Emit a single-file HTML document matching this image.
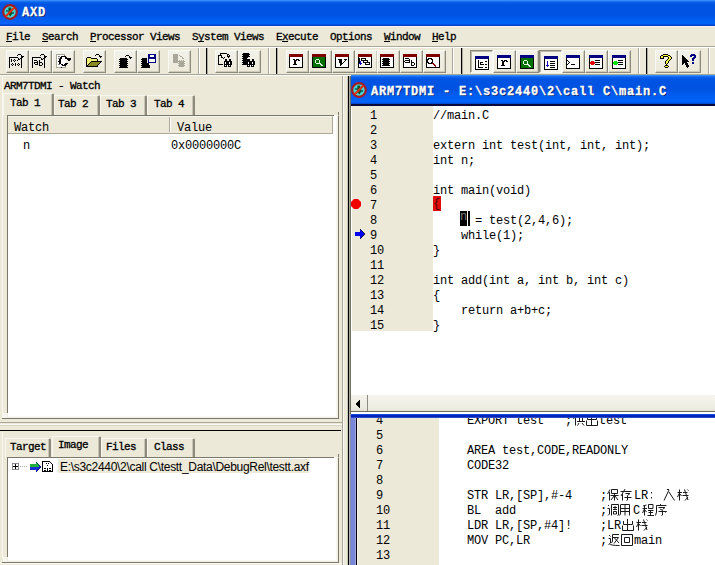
<!DOCTYPE html>
<html><head><meta charset="utf-8">
<style>
*{margin:0;padding:0;box-sizing:border-box}
html,body{width:715px;height:565px;overflow:hidden;background:#ECE9D8}
body{position:relative;font-family:"Liberation Mono",monospace;font-size:12px;color:#000}
.a{position:absolute}
.ui{font-family:"Liberation Mono",monospace;font-size:11px;letter-spacing:-0.6px;line-height:14px;white-space:pre;-webkit-text-stroke:0.3px #000}
.code{font-family:"Liberation Mono",monospace;font-size:12px;letter-spacing:-0.2px;line-height:15px;white-space:pre}
.u{text-decoration:underline}
.btn{position:absolute;top:50px;width:23px;height:23px;border:1px solid;border-color:#FAFAF5 #8D8B7D #8D8B7D #FAFAF5;box-shadow:inset -1px -1px 0 #CFCBBB;background:linear-gradient(#F2F1EA,#ECE9D8)}
.btn.p{border-color:#8A887A #FAFAF5 #FAFAF5 #8A887A;box-shadow:inset 1px 1px 0 #BDBAAA;background:#F4F3EC}
.btn svg{position:absolute;left:2px;top:2px}
.btn.p svg{left:3px;top:3px}
</style></head><body>

<div class="a" style="left:0px;top:0px;width:715px;height:26px;background:linear-gradient(#3D95FF 0px,#2A7FF7 1px,#0B62EC 2px,#0054E3 4px,#0053E1 15px,#005CF0 19px,#0064F8 24px,#0040CF 25px,#0038C0 26px)"></div>
<div class="a" style="left:0px;top:26px;width:715px;height:1px;background:#F6F5EF"></div>
<svg class="a" style="left:2px;top:4px" width="16" height="16" viewBox="0 0 16 16"><circle cx="8" cy="8" r="6.8" fill="#3ED8D8" stroke="#A81A20" stroke-width="2.2"/><path d="M6.5 3.5 L9 3.5 L10.5 9 L8.5 12.5 L6 10 Z" fill="#145020"/><circle cx="5" cy="7" r="1" fill="#145060"/><circle cx="11" cy="9" r="1" fill="#145060"/><line x1="3.5" y1="12.5" x2="12.5" y2="3.5" stroke="#E03010" stroke-width="2.2"/></svg>
<div class="a " style="left:22px;top:6px;font-family:'Liberation Mono',monospace;font-weight:bold;font-size:12px;line-height:14px;color:#fff;-webkit-text-stroke:0.3px #fff;text-shadow:1px 1px 0 #0A246A;letter-spacing:0.8px">AXD</div>
<div class="a" style="left:0px;top:46px;width:715px;height:1px;background:#ACA899"></div>
<div class="a" style="left:0px;top:47px;width:715px;height:1px;background:#FFFFFF"></div>
<div class="a ui" style="left:6px;top:30px;">File</div>
<div class="a" style="left:6px;top:41px;width:6px;height:1px;background:#000"></div>
<div class="a ui" style="left:42px;top:30px;">Search</div>
<div class="a" style="left:42px;top:41px;width:6px;height:1px;background:#000"></div>
<div class="a ui" style="left:90px;top:30px;">Processor Views</div>
<div class="a" style="left:90px;top:41px;width:6px;height:1px;background:#000"></div>
<div class="a ui" style="left:192px;top:30px;">System Views</div>
<div class="a" style="left:198px;top:41px;width:6px;height:1px;background:#000"></div>
<div class="a ui" style="left:276px;top:30px;">Execute</div>
<div class="a" style="left:282px;top:41px;width:6px;height:1px;background:#000"></div>
<div class="a ui" style="left:330px;top:30px;">Options</div>
<div class="a" style="left:342px;top:41px;width:6px;height:1px;background:#000"></div>
<div class="a ui" style="left:384px;top:30px;">Window</div>
<div class="a" style="left:384px;top:41px;width:6px;height:1px;background:#000"></div>
<div class="a ui" style="left:432px;top:30px;">Help</div>
<div class="a" style="left:432px;top:41px;width:6px;height:1px;background:#000"></div>
<div class="btn" style="left:6px"><svg width="16" height="16" viewBox="0 0 16 16" shape-rendering="crispEdges"><rect x="9" y="1" width="3" height="1" fill="#000000"/><rect x="8" y="2" width="1" height="1" fill="#000000"/><rect x="12" y="2" width="1" height="1" fill="#000000"/><rect x="12" y="3" width="3" height="1" fill="#000000"/><rect x="0" y="4" width="9" height="1" fill="#000000"/><rect x="12" y="4" width="2" height="1" fill="#000000"/><rect x="0" y="5" width="1" height="1" fill="#000000"/><rect x="9" y="5" width="1" height="1" fill="#000000"/><rect x="11" y="5" width="2" height="1" fill="#000000"/><rect x="0" y="6" width="1" height="1" fill="#000000"/><rect x="2" y="6" width="1" height="1" fill="#000000"/><rect x="5" y="6" width="1" height="1" fill="#000000"/><rect x="9" y="6" width="2" height="1" fill="#000000"/><rect x="12" y="6" width="1" height="1" fill="#000000"/><rect x="0" y="7" width="1" height="1" fill="#000000"/><rect x="2" y="7" width="1" height="1" fill="#000000"/><rect x="4" y="7" width="1" height="1" fill="#000000"/><rect x="6" y="7" width="1" height="1" fill="#000000"/><rect x="8" y="7" width="1" height="1" fill="#000000"/><rect x="12" y="7" width="1" height="1" fill="#000000"/><rect x="0" y="8" width="1" height="1" fill="#000000"/><rect x="2" y="8" width="1" height="1" fill="#000000"/><rect x="5" y="8" width="1" height="1" fill="#000000"/><rect x="12" y="8" width="1" height="1" fill="#000000"/><rect x="0" y="9" width="1" height="1" fill="#000000"/><rect x="12" y="9" width="1" height="1" fill="#000000"/><rect x="0" y="10" width="1" height="1" fill="#000000"/><rect x="3" y="10" width="1" height="1" fill="#000000"/><rect x="6" y="10" width="1" height="1" fill="#000000"/><rect x="9" y="10" width="1" height="1" fill="#000000"/><rect x="12" y="10" width="1" height="1" fill="#000000"/><rect x="0" y="11" width="1" height="1" fill="#000000"/><rect x="2" y="11" width="1" height="1" fill="#000000"/><rect x="4" y="11" width="1" height="1" fill="#000000"/><rect x="6" y="11" width="1" height="1" fill="#000000"/><rect x="8" y="11" width="1" height="1" fill="#000000"/><rect x="10" y="11" width="1" height="1" fill="#000000"/><rect x="12" y="11" width="1" height="1" fill="#000000"/><rect x="0" y="12" width="1" height="1" fill="#000000"/><rect x="3" y="12" width="1" height="1" fill="#000000"/><rect x="6" y="12" width="1" height="1" fill="#000000"/><rect x="9" y="12" width="1" height="1" fill="#000000"/><rect x="12" y="12" width="1" height="1" fill="#000000"/><rect x="0" y="13" width="1" height="1" fill="#000000"/><rect x="12" y="13" width="1" height="1" fill="#000000"/><rect x="0" y="14" width="1" height="1" fill="#000000"/><rect x="12" y="14" width="1" height="1" fill="#000000"/></svg></div>
<div class="btn" style="left:29px"><svg width="16" height="16" viewBox="0 0 16 16" shape-rendering="crispEdges"><rect x="9" y="1" width="3" height="1" fill="#000000"/><rect x="8" y="2" width="1" height="1" fill="#000000"/><rect x="12" y="2" width="1" height="1" fill="#000000"/><rect x="12" y="3" width="3" height="1" fill="#000000"/><rect x="0" y="4" width="9" height="1" fill="#000000"/><rect x="12" y="4" width="2" height="1" fill="#000000"/><rect x="0" y="5" width="1" height="1" fill="#000000"/><rect x="9" y="5" width="1" height="1" fill="#000000"/><rect x="11" y="5" width="2" height="1" fill="#000000"/><rect x="0" y="6" width="1" height="1" fill="#000000"/><rect x="9" y="6" width="2" height="1" fill="#000000"/><rect x="12" y="6" width="1" height="1" fill="#000000"/><rect x="0" y="7" width="1" height="1" fill="#000000"/><rect x="2" y="7" width="3" height="1" fill="#000000"/><rect x="7" y="7" width="1" height="1" fill="#000000"/><rect x="12" y="7" width="1" height="1" fill="#000000"/><rect x="0" y="8" width="1" height="1" fill="#000000"/><rect x="5" y="8" width="1" height="1" fill="#000000"/><rect x="7" y="8" width="1" height="1" fill="#000000"/><rect x="12" y="8" width="1" height="1" fill="#000000"/><rect x="0" y="9" width="1" height="1" fill="#000000"/><rect x="2" y="9" width="4" height="1" fill="#000000"/><rect x="7" y="9" width="3" height="1" fill="#000000"/><rect x="12" y="9" width="1" height="1" fill="#000000"/><rect x="0" y="10" width="1" height="1" fill="#000000"/><rect x="2" y="10" width="1" height="1" fill="#000000"/><rect x="5" y="10" width="1" height="1" fill="#000000"/><rect x="7" y="10" width="1" height="1" fill="#000000"/><rect x="10" y="10" width="1" height="1" fill="#000000"/><rect x="12" y="10" width="1" height="1" fill="#000000"/><rect x="0" y="11" width="1" height="1" fill="#000000"/><rect x="3" y="11" width="3" height="1" fill="#000000"/><rect x="7" y="11" width="1" height="1" fill="#000000"/><rect x="10" y="11" width="1" height="1" fill="#000000"/><rect x="12" y="11" width="1" height="1" fill="#000000"/><rect x="0" y="12" width="1" height="1" fill="#000000"/><rect x="7" y="12" width="3" height="1" fill="#000000"/><rect x="12" y="12" width="1" height="1" fill="#000000"/><rect x="0" y="13" width="1" height="1" fill="#000000"/><rect x="12" y="13" width="1" height="1" fill="#000000"/><rect x="0" y="14" width="1" height="1" fill="#000000"/><rect x="12" y="14" width="1" height="1" fill="#000000"/></svg></div>
<div class="btn" style="left:52px"><svg width="16" height="16" viewBox="0 0 16 16" shape-rendering="crispEdges"><rect x="1" y="1" width="9" height="1" fill="#A9A797"/><rect x="1" y="2" width="1" height="1" fill="#A9A797"/><rect x="2" y="2" width="7" height="1" fill="#FFFFFF"/><rect x="9" y="2" width="1" height="1" fill="#808080"/><rect x="1" y="3" width="1" height="1" fill="#A9A797"/><rect x="2" y="3" width="1" height="1" fill="#FFFFFF"/><rect x="3" y="3" width="2" height="1" fill="#808080"/><rect x="5" y="3" width="1" height="1" fill="#FFFFFF"/><rect x="6" y="3" width="5" height="1" fill="#000000"/><rect x="1" y="4" width="1" height="1" fill="#A9A797"/><rect x="2" y="4" width="3" height="1" fill="#FFFFFF"/><rect x="5" y="4" width="2" height="1" fill="#000000"/><rect x="7" y="4" width="3" height="1" fill="#FFFFFF"/><rect x="10" y="4" width="2" height="1" fill="#000000"/><rect x="1" y="5" width="1" height="1" fill="#A9A797"/><rect x="2" y="5" width="1" height="1" fill="#FFFFFF"/><rect x="3" y="5" width="2" height="1" fill="#808080"/><rect x="5" y="5" width="2" height="1" fill="#000000"/><rect x="7" y="5" width="3" height="1" fill="#FFFFFF"/><rect x="10" y="5" width="6" height="1" fill="#000000"/><rect x="1" y="6" width="1" height="1" fill="#A9A797"/><rect x="2" y="6" width="2" height="1" fill="#FFFFFF"/><rect x="4" y="6" width="2" height="1" fill="#000000"/><rect x="6" y="6" width="5" height="1" fill="#FFFFFF"/><rect x="12" y="6" width="4" height="1" fill="#000000"/><rect x="1" y="7" width="1" height="1" fill="#A9A797"/><rect x="2" y="7" width="2" height="1" fill="#FFFFFF"/><rect x="4" y="7" width="2" height="1" fill="#000000"/><rect x="6" y="7" width="5" height="1" fill="#FFFFFF"/><rect x="13" y="7" width="2" height="1" fill="#000000"/><rect x="1" y="8" width="1" height="1" fill="#A9A797"/><rect x="2" y="8" width="1" height="1" fill="#FFFFFF"/><rect x="3" y="8" width="3" height="1" fill="#000000"/><rect x="6" y="8" width="5" height="1" fill="#FFFFFF"/><rect x="1" y="9" width="1" height="1" fill="#A9A797"/><rect x="2" y="9" width="2" height="1" fill="#FFFFFF"/><rect x="4" y="9" width="2" height="1" fill="#000000"/><rect x="6" y="9" width="5" height="1" fill="#FFFFFF"/><rect x="1" y="10" width="1" height="1" fill="#A9A797"/><rect x="2" y="10" width="2" height="1" fill="#FFFFFF"/><rect x="4" y="10" width="2" height="1" fill="#000000"/><rect x="6" y="10" width="4" height="1" fill="#FFFFFF"/><rect x="10" y="10" width="3" height="1" fill="#000000"/><rect x="1" y="11" width="1" height="1" fill="#A9A797"/><rect x="2" y="11" width="1" height="1" fill="#FFFFFF"/><rect x="3" y="11" width="2" height="1" fill="#808080"/><rect x="5" y="11" width="1" height="1" fill="#FFFFFF"/><rect x="6" y="11" width="2" height="1" fill="#000000"/><rect x="8" y="11" width="1" height="1" fill="#FFFFFF"/><rect x="9" y="11" width="3" height="1" fill="#000000"/><rect x="1" y="12" width="1" height="1" fill="#A9A797"/><rect x="2" y="12" width="5" height="1" fill="#FFFFFF"/><rect x="7" y="12" width="4" height="1" fill="#000000"/><rect x="1" y="13" width="1" height="1" fill="#A9A797"/><rect x="2" y="13" width="8" height="1" fill="#FFFFFF"/><rect x="10" y="13" width="1" height="1" fill="#808080"/><rect x="1" y="14" width="5" height="1" fill="#A9A797"/><rect x="6" y="14" width="1" height="1" fill="#000000"/><rect x="7" y="14" width="4" height="1" fill="#A9A797"/></svg></div>
<div class="btn" style="left:83px"><svg width="16" height="16" viewBox="0 0 16 16" shape-rendering="crispEdges"><rect x="10" y="1" width="3" height="1" fill="#000000"/><rect x="9" y="2" width="1" height="1" fill="#000000"/><rect x="13" y="2" width="1" height="1" fill="#000000"/><rect x="13" y="3" width="3" height="1" fill="#000000"/><rect x="1" y="4" width="4" height="1" fill="#000000"/><rect x="14" y="4" width="1" height="1" fill="#000000"/><rect x="0" y="5" width="1" height="1" fill="#000000"/><rect x="1" y="5" width="4" height="1" fill="#F0F078"/><rect x="5" y="5" width="6" height="1" fill="#000000"/><rect x="0" y="6" width="1" height="1" fill="#000000"/><rect x="1" y="6" width="10" height="1" fill="#F0F078"/><rect x="11" y="6" width="1" height="1" fill="#000000"/><rect x="0" y="7" width="1" height="1" fill="#000000"/><rect x="1" y="7" width="10" height="1" fill="#F0F078"/><rect x="11" y="7" width="1" height="1" fill="#000000"/><rect x="0" y="8" width="1" height="1" fill="#000000"/><rect x="1" y="8" width="4" height="1" fill="#F0F078"/><rect x="5" y="8" width="11" height="1" fill="#000000"/><rect x="0" y="9" width="1" height="1" fill="#000000"/><rect x="1" y="9" width="3" height="1" fill="#F0F078"/><rect x="4" y="9" width="1" height="1" fill="#000000"/><rect x="5" y="9" width="9" height="1" fill="#8A8A22"/><rect x="14" y="9" width="1" height="1" fill="#000000"/><rect x="0" y="10" width="1" height="1" fill="#000000"/><rect x="1" y="10" width="2" height="1" fill="#F0F078"/><rect x="3" y="10" width="1" height="1" fill="#000000"/><rect x="4" y="10" width="9" height="1" fill="#8A8A22"/><rect x="13" y="10" width="1" height="1" fill="#000000"/><rect x="0" y="11" width="1" height="1" fill="#000000"/><rect x="1" y="11" width="1" height="1" fill="#F0F078"/><rect x="2" y="11" width="1" height="1" fill="#000000"/><rect x="3" y="11" width="9" height="1" fill="#8A8A22"/><rect x="12" y="11" width="1" height="1" fill="#000000"/><rect x="0" y="12" width="2" height="1" fill="#000000"/><rect x="2" y="12" width="9" height="1" fill="#8A8A22"/><rect x="11" y="12" width="1" height="1" fill="#000000"/><rect x="0" y="13" width="12" height="1" fill="#000000"/></svg></div>
<div class="btn" style="left:114px"><svg width="16" height="16" viewBox="0 0 16 16" shape-rendering="crispEdges"><rect x="9" y="2" width="3" height="1" fill="#000000"/><rect x="8" y="3" width="1" height="1" fill="#000000"/><rect x="12" y="3" width="1" height="1" fill="#000000"/><rect x="12" y="4" width="3" height="1" fill="#000000"/><rect x="3" y="5" width="7" height="1" fill="#000000"/><rect x="13" y="5" width="1" height="1" fill="#000000"/><rect x="2" y="6" width="9" height="1" fill="#000000"/><rect x="3" y="7" width="7" height="1" fill="#000000"/><rect x="2" y="8" width="9" height="1" fill="#000000"/><rect x="3" y="9" width="7" height="1" fill="#000000"/><rect x="2" y="10" width="9" height="1" fill="#000000"/><rect x="3" y="11" width="7" height="1" fill="#000000"/><rect x="2" y="12" width="9" height="1" fill="#000000"/><rect x="3" y="13" width="7" height="1" fill="#000000"/><rect x="2" y="14" width="9" height="1" fill="#000000"/></svg></div>
<div class="btn" style="left:137px"><svg width="16" height="16" viewBox="0 0 16 16" shape-rendering="crispEdges"><rect x="8" y="1" width="8" height="1" fill="#000080"/><rect x="8" y="2" width="2" height="1" fill="#000080"/><rect x="10" y="2" width="4" height="1" fill="#FFFFFF"/><rect x="14" y="2" width="2" height="1" fill="#000080"/><rect x="8" y="3" width="2" height="1" fill="#000080"/><rect x="10" y="3" width="4" height="1" fill="#FFFFFF"/><rect x="14" y="3" width="2" height="1" fill="#000080"/><rect x="8" y="4" width="8" height="1" fill="#000080"/><rect x="2" y="5" width="5" height="1" fill="#000000"/><rect x="8" y="5" width="8" height="1" fill="#000080"/><rect x="1" y="6" width="6" height="1" fill="#000000"/><rect x="8" y="6" width="1" height="1" fill="#000080"/><rect x="9" y="6" width="6" height="1" fill="#FFFFFF"/><rect x="15" y="6" width="1" height="1" fill="#000080"/><rect x="2" y="7" width="5" height="1" fill="#000000"/><rect x="8" y="7" width="1" height="1" fill="#000080"/><rect x="9" y="7" width="6" height="1" fill="#FFFFFF"/><rect x="15" y="7" width="1" height="1" fill="#000080"/><rect x="1" y="8" width="6" height="1" fill="#000000"/><rect x="8" y="8" width="1" height="1" fill="#000080"/><rect x="9" y="8" width="6" height="1" fill="#FFFFFF"/><rect x="15" y="8" width="1" height="1" fill="#000080"/><rect x="2" y="9" width="5" height="1" fill="#000000"/><rect x="8" y="9" width="8" height="1" fill="#000080"/><rect x="1" y="10" width="8" height="1" fill="#000000"/><rect x="2" y="11" width="7" height="1" fill="#000000"/><rect x="1" y="12" width="9" height="1" fill="#000000"/><rect x="2" y="13" width="8" height="1" fill="#000000"/><rect x="1" y="14" width="9" height="1" fill="#000000"/></svg></div>
<div class="btn" style="left:168px"><svg width="16" height="16" viewBox="0 0 16 16" shape-rendering="crispEdges"><rect x="2" y="1" width="5" height="1" fill="#A9A797"/><rect x="2" y="2" width="5" height="1" fill="#A9A797"/><rect x="8" y="2" width="1" height="1" fill="#A9A797"/><rect x="2" y="3" width="5" height="1" fill="#A9A797"/><rect x="9" y="3" width="2" height="1" fill="#A9A797"/><rect x="2" y="4" width="5" height="1" fill="#A9A797"/><rect x="11" y="4" width="1" height="1" fill="#A9A797"/><rect x="2" y="5" width="5" height="1" fill="#A9A797"/><rect x="11" y="5" width="2" height="1" fill="#A9A797"/><rect x="2" y="6" width="5" height="1" fill="#A9A797"/><rect x="2" y="7" width="5" height="1" fill="#A9A797"/><rect x="8" y="7" width="1" height="1" fill="#A9A797"/><rect x="10" y="7" width="1" height="1" fill="#A9A797"/><rect x="12" y="7" width="1" height="1" fill="#A9A797"/><rect x="2" y="8" width="12" height="1" fill="#A9A797"/><rect x="2" y="9" width="5" height="1" fill="#A9A797"/><rect x="8" y="9" width="5" height="1" fill="#A9A797"/><rect x="7" y="10" width="7" height="1" fill="#A9A797"/><rect x="8" y="11" width="5" height="1" fill="#A9A797"/><rect x="7" y="12" width="7" height="1" fill="#A9A797"/><rect x="8" y="13" width="5" height="1" fill="#A9A797"/></svg></div>
<div class="a" style="left:198px;top:48px;width:1px;height:26px;background:#ACA899"></div>
<div class="a" style="left:199px;top:48px;width:1px;height:26px;background:#fff"></div>
<div class="a" style="left:206px;top:48px;width:1px;height:26px;background:#000"></div>
<div class="a" style="left:207px;top:48px;width:1px;height:26px;background:#ACA899"></div>
<div class="btn" style="left:215px"><svg width="16" height="16" viewBox="0 0 16 16" shape-rendering="crispEdges"><rect x="2" y="0" width="7" height="1" fill="#000000"/><rect x="2" y="1" width="1" height="1" fill="#000000"/><rect x="9" y="1" width="2" height="1" fill="#000000"/><rect x="0" y="2" width="4" height="1" fill="#000000"/><rect x="9" y="2" width="1" height="1" fill="#000000"/><rect x="11" y="2" width="1" height="1" fill="#000000"/><rect x="0" y="3" width="1" height="1" fill="#000000"/><rect x="3" y="3" width="1" height="1" fill="#000000"/><rect x="9" y="3" width="3" height="1" fill="#000000"/><rect x="0" y="4" width="1" height="1" fill="#000000"/><rect x="3" y="4" width="2" height="1" fill="#000000"/><rect x="6" y="4" width="1" height="1" fill="#000000"/><rect x="10" y="4" width="1" height="1" fill="#000000"/><rect x="0" y="5" width="1" height="1" fill="#000000"/><rect x="5" y="5" width="1" height="1" fill="#000000"/><rect x="0" y="6" width="1" height="1" fill="#000000"/><rect x="7" y="6" width="2" height="1" fill="#000000"/><rect x="11" y="6" width="2" height="1" fill="#000000"/><rect x="0" y="7" width="1" height="1" fill="#000000"/><rect x="7" y="7" width="2" height="1" fill="#000000"/><rect x="11" y="7" width="2" height="1" fill="#000000"/><rect x="0" y="8" width="1" height="1" fill="#000000"/><rect x="6" y="8" width="8" height="1" fill="#000000"/><rect x="0" y="9" width="1" height="1" fill="#000000"/><rect x="6" y="9" width="1" height="1" fill="#000000"/><rect x="7" y="9" width="1" height="1" fill="#FFFFFF"/><rect x="8" y="9" width="3" height="1" fill="#000000"/><rect x="11" y="9" width="1" height="1" fill="#FFFFFF"/><rect x="12" y="9" width="2" height="1" fill="#000000"/><rect x="0" y="10" width="1" height="1" fill="#000000"/><rect x="6" y="10" width="1" height="1" fill="#000000"/><rect x="7" y="10" width="1" height="1" fill="#FFFFFF"/><rect x="8" y="10" width="3" height="1" fill="#000000"/><rect x="11" y="10" width="1" height="1" fill="#FFFFFF"/><rect x="12" y="10" width="2" height="1" fill="#000000"/><rect x="0" y="11" width="5" height="1" fill="#000000"/><rect x="6" y="11" width="8" height="1" fill="#000000"/><rect x="6" y="12" width="1" height="1" fill="#000000"/><rect x="7" y="12" width="1" height="1" fill="#FFFFFF"/><rect x="8" y="12" width="1" height="1" fill="#000000"/><rect x="10" y="12" width="1" height="1" fill="#000000"/><rect x="11" y="12" width="1" height="1" fill="#FFFFFF"/><rect x="12" y="12" width="1" height="1" fill="#000000"/><rect x="6" y="13" width="3" height="1" fill="#000000"/><rect x="10" y="13" width="3" height="1" fill="#000000"/></svg></div>
<div class="btn" style="left:238px"><svg width="16" height="16" viewBox="0 0 16 16" shape-rendering="crispEdges"><rect x="2" y="0" width="6" height="1" fill="#000000"/><rect x="1" y="1" width="8" height="1" fill="#000000"/><rect x="2" y="2" width="6" height="1" fill="#000000"/><rect x="1" y="3" width="8" height="1" fill="#000000"/><rect x="2" y="4" width="5" height="1" fill="#000000"/><rect x="1" y="5" width="5" height="1" fill="#000000"/><rect x="2" y="6" width="7" height="1" fill="#000000"/><rect x="11" y="6" width="2" height="1" fill="#000000"/><rect x="1" y="7" width="8" height="1" fill="#000000"/><rect x="11" y="7" width="2" height="1" fill="#000000"/><rect x="2" y="8" width="12" height="1" fill="#000000"/><rect x="1" y="9" width="6" height="1" fill="#000000"/><rect x="7" y="9" width="1" height="1" fill="#FFFFFF"/><rect x="8" y="9" width="3" height="1" fill="#000000"/><rect x="11" y="9" width="1" height="1" fill="#FFFFFF"/><rect x="12" y="9" width="2" height="1" fill="#000000"/><rect x="2" y="10" width="5" height="1" fill="#000000"/><rect x="7" y="10" width="1" height="1" fill="#FFFFFF"/><rect x="8" y="10" width="3" height="1" fill="#000000"/><rect x="11" y="10" width="1" height="1" fill="#FFFFFF"/><rect x="12" y="10" width="2" height="1" fill="#000000"/><rect x="1" y="11" width="13" height="1" fill="#000000"/><rect x="6" y="12" width="1" height="1" fill="#000000"/><rect x="7" y="12" width="1" height="1" fill="#FFFFFF"/><rect x="8" y="12" width="1" height="1" fill="#000000"/><rect x="10" y="12" width="1" height="1" fill="#000000"/><rect x="11" y="12" width="1" height="1" fill="#FFFFFF"/><rect x="12" y="12" width="1" height="1" fill="#000000"/><rect x="6" y="13" width="3" height="1" fill="#000000"/><rect x="10" y="13" width="3" height="1" fill="#000000"/></svg></div>
<div class="a" style="left:268px;top:48px;width:1px;height:26px;background:#ACA899"></div>
<div class="a" style="left:269px;top:48px;width:1px;height:26px;background:#fff"></div>
<div class="a" style="left:276px;top:48px;width:1px;height:26px;background:#000"></div>
<div class="a" style="left:277px;top:48px;width:1px;height:26px;background:#ACA899"></div>
<div class="btn" style="left:286px"><svg width="16" height="16" viewBox="0 0 16 16" shape-rendering="crispEdges"><rect x="0" y="1" width="14" height="1" fill="#800000"/><rect x="0" y="2" width="14" height="1" fill="#800000"/><rect x="0" y="3" width="14" height="1" fill="#800000"/><rect x="0" y="4" width="1" height="1" fill="#000000"/><rect x="1" y="4" width="12" height="1" fill="#FFFFFF"/><rect x="13" y="4" width="1" height="1" fill="#000000"/><rect x="0" y="5" width="1" height="1" fill="#000000"/><rect x="1" y="5" width="12" height="1" fill="#FFFFFF"/><rect x="13" y="5" width="1" height="1" fill="#000000"/><rect x="0" y="6" width="1" height="1" fill="#000000"/><rect x="1" y="6" width="3" height="1" fill="#FFFFFF"/><rect x="4" y="6" width="2" height="1" fill="#000000"/><rect x="6" y="6" width="1" height="1" fill="#FFFFFF"/><rect x="7" y="6" width="3" height="1" fill="#000000"/><rect x="10" y="6" width="3" height="1" fill="#FFFFFF"/><rect x="13" y="6" width="1" height="1" fill="#000000"/><rect x="0" y="7" width="1" height="1" fill="#000000"/><rect x="1" y="7" width="4" height="1" fill="#FFFFFF"/><rect x="5" y="7" width="3" height="1" fill="#000000"/><rect x="8" y="7" width="1" height="1" fill="#FFFFFF"/><rect x="9" y="7" width="2" height="1" fill="#000000"/><rect x="11" y="7" width="2" height="1" fill="#FFFFFF"/><rect x="13" y="7" width="1" height="1" fill="#000000"/><rect x="0" y="8" width="1" height="1" fill="#000000"/><rect x="1" y="8" width="4" height="1" fill="#FFFFFF"/><rect x="5" y="8" width="2" height="1" fill="#000000"/><rect x="7" y="8" width="6" height="1" fill="#FFFFFF"/><rect x="13" y="8" width="1" height="1" fill="#000000"/><rect x="0" y="9" width="1" height="1" fill="#000000"/><rect x="1" y="9" width="4" height="1" fill="#FFFFFF"/><rect x="5" y="9" width="2" height="1" fill="#000000"/><rect x="7" y="9" width="6" height="1" fill="#FFFFFF"/><rect x="13" y="9" width="1" height="1" fill="#000000"/><rect x="0" y="10" width="1" height="1" fill="#000000"/><rect x="1" y="10" width="4" height="1" fill="#FFFFFF"/><rect x="5" y="10" width="2" height="1" fill="#000000"/><rect x="7" y="10" width="6" height="1" fill="#FFFFFF"/><rect x="13" y="10" width="1" height="1" fill="#000000"/><rect x="0" y="11" width="1" height="1" fill="#000000"/><rect x="1" y="11" width="3" height="1" fill="#FFFFFF"/><rect x="4" y="11" width="4" height="1" fill="#000000"/><rect x="8" y="11" width="5" height="1" fill="#FFFFFF"/><rect x="13" y="11" width="1" height="1" fill="#000000"/><rect x="0" y="12" width="1" height="1" fill="#000000"/><rect x="1" y="12" width="12" height="1" fill="#FFFFFF"/><rect x="13" y="12" width="1" height="1" fill="#000000"/><rect x="0" y="13" width="1" height="1" fill="#000000"/><rect x="1" y="13" width="12" height="1" fill="#FFFFFF"/><rect x="13" y="13" width="1" height="1" fill="#000000"/><rect x="0" y="14" width="14" height="1" fill="#000000"/></svg></div>
<div class="btn" style="left:309px"><svg width="16" height="16" viewBox="0 0 16 16" shape-rendering="crispEdges"><rect x="0" y="1" width="14" height="1" fill="#800000"/><rect x="0" y="2" width="14" height="1" fill="#800000"/><rect x="0" y="3" width="14" height="1" fill="#800000"/><rect x="0" y="4" width="1" height="1" fill="#000000"/><rect x="1" y="4" width="12" height="1" fill="#007000"/><rect x="13" y="4" width="1" height="1" fill="#000000"/><rect x="0" y="5" width="1" height="1" fill="#000000"/><rect x="1" y="5" width="12" height="1" fill="#007000"/><rect x="13" y="5" width="1" height="1" fill="#000000"/><rect x="0" y="6" width="1" height="1" fill="#000000"/><rect x="1" y="6" width="3" height="1" fill="#007000"/><rect x="4" y="6" width="3" height="1" fill="#E0FFE0"/><rect x="7" y="6" width="6" height="1" fill="#007000"/><rect x="13" y="6" width="1" height="1" fill="#000000"/><rect x="0" y="7" width="1" height="1" fill="#000000"/><rect x="1" y="7" width="2" height="1" fill="#007000"/><rect x="3" y="7" width="1" height="1" fill="#E0FFE0"/><rect x="4" y="7" width="3" height="1" fill="#007000"/><rect x="7" y="7" width="1" height="1" fill="#E0FFE0"/><rect x="8" y="7" width="5" height="1" fill="#007000"/><rect x="13" y="7" width="1" height="1" fill="#000000"/><rect x="0" y="8" width="1" height="1" fill="#000000"/><rect x="1" y="8" width="2" height="1" fill="#007000"/><rect x="3" y="8" width="1" height="1" fill="#E0FFE0"/><rect x="4" y="8" width="3" height="1" fill="#007000"/><rect x="7" y="8" width="1" height="1" fill="#E0FFE0"/><rect x="8" y="8" width="5" height="1" fill="#007000"/><rect x="13" y="8" width="1" height="1" fill="#000000"/><rect x="0" y="9" width="1" height="1" fill="#000000"/><rect x="1" y="9" width="2" height="1" fill="#007000"/><rect x="3" y="9" width="1" height="1" fill="#E0FFE0"/><rect x="4" y="9" width="3" height="1" fill="#007000"/><rect x="7" y="9" width="1" height="1" fill="#E0FFE0"/><rect x="8" y="9" width="5" height="1" fill="#007000"/><rect x="13" y="9" width="1" height="1" fill="#000000"/><rect x="0" y="10" width="1" height="1" fill="#000000"/><rect x="1" y="10" width="3" height="1" fill="#007000"/><rect x="4" y="10" width="5" height="1" fill="#E0FFE0"/><rect x="9" y="10" width="4" height="1" fill="#007000"/><rect x="13" y="10" width="1" height="1" fill="#000000"/><rect x="0" y="11" width="1" height="1" fill="#000000"/><rect x="1" y="11" width="7" height="1" fill="#007000"/><rect x="8" y="11" width="2" height="1" fill="#E0FFE0"/><rect x="10" y="11" width="3" height="1" fill="#007000"/><rect x="13" y="11" width="1" height="1" fill="#000000"/><rect x="0" y="12" width="1" height="1" fill="#000000"/><rect x="1" y="12" width="8" height="1" fill="#007000"/><rect x="9" y="12" width="2" height="1" fill="#E0FFE0"/><rect x="11" y="12" width="2" height="1" fill="#007000"/><rect x="13" y="12" width="1" height="1" fill="#000000"/><rect x="0" y="13" width="1" height="1" fill="#000000"/><rect x="1" y="13" width="12" height="1" fill="#007000"/><rect x="13" y="13" width="1" height="1" fill="#000000"/><rect x="0" y="14" width="14" height="1" fill="#000000"/></svg></div>
<div class="btn" style="left:332px"><svg width="16" height="16" viewBox="0 0 16 16" shape-rendering="crispEdges"><rect x="0" y="1" width="14" height="1" fill="#800000"/><rect x="0" y="2" width="14" height="1" fill="#800000"/><rect x="0" y="3" width="14" height="1" fill="#800000"/><rect x="0" y="4" width="1" height="1" fill="#000000"/><rect x="1" y="4" width="12" height="1" fill="#FFFFFF"/><rect x="13" y="4" width="1" height="1" fill="#000000"/><rect x="0" y="5" width="1" height="1" fill="#000000"/><rect x="1" y="5" width="12" height="1" fill="#FFFFFF"/><rect x="13" y="5" width="1" height="1" fill="#000000"/><rect x="0" y="6" width="1" height="1" fill="#000000"/><rect x="1" y="6" width="2" height="1" fill="#FFFFFF"/><rect x="3" y="6" width="4" height="1" fill="#000000"/><rect x="7" y="6" width="2" height="1" fill="#FFFFFF"/><rect x="9" y="6" width="3" height="1" fill="#000000"/><rect x="12" y="6" width="1" height="1" fill="#FFFFFF"/><rect x="13" y="6" width="1" height="1" fill="#000000"/><rect x="0" y="7" width="1" height="1" fill="#000000"/><rect x="1" y="7" width="3" height="1" fill="#FFFFFF"/><rect x="4" y="7" width="3" height="1" fill="#000000"/><rect x="7" y="7" width="3" height="1" fill="#FFFFFF"/><rect x="10" y="7" width="1" height="1" fill="#000000"/><rect x="11" y="7" width="2" height="1" fill="#FFFFFF"/><rect x="13" y="7" width="1" height="1" fill="#000000"/><rect x="0" y="8" width="1" height="1" fill="#000000"/><rect x="1" y="8" width="3" height="1" fill="#FFFFFF"/><rect x="4" y="8" width="3" height="1" fill="#000000"/><rect x="7" y="8" width="2" height="1" fill="#FFFFFF"/><rect x="9" y="8" width="1" height="1" fill="#000000"/><rect x="10" y="8" width="3" height="1" fill="#FFFFFF"/><rect x="13" y="8" width="1" height="1" fill="#000000"/><rect x="0" y="9" width="1" height="1" fill="#000000"/><rect x="1" y="9" width="3" height="1" fill="#FFFFFF"/><rect x="4" y="9" width="3" height="1" fill="#000000"/><rect x="7" y="9" width="1" height="1" fill="#FFFFFF"/><rect x="8" y="9" width="1" height="1" fill="#000000"/><rect x="9" y="9" width="4" height="1" fill="#FFFFFF"/><rect x="13" y="9" width="1" height="1" fill="#000000"/><rect x="0" y="10" width="1" height="1" fill="#000000"/><rect x="1" y="10" width="4" height="1" fill="#FFFFFF"/><rect x="5" y="10" width="3" height="1" fill="#000000"/><rect x="8" y="10" width="5" height="1" fill="#FFFFFF"/><rect x="13" y="10" width="1" height="1" fill="#000000"/><rect x="0" y="11" width="1" height="1" fill="#000000"/><rect x="1" y="11" width="4" height="1" fill="#FFFFFF"/><rect x="5" y="11" width="2" height="1" fill="#000000"/><rect x="7" y="11" width="6" height="1" fill="#FFFFFF"/><rect x="13" y="11" width="1" height="1" fill="#000000"/><rect x="0" y="12" width="1" height="1" fill="#000000"/><rect x="1" y="12" width="4" height="1" fill="#FFFFFF"/><rect x="5" y="12" width="1" height="1" fill="#000000"/><rect x="6" y="12" width="7" height="1" fill="#FFFFFF"/><rect x="13" y="12" width="1" height="1" fill="#000000"/><rect x="0" y="13" width="1" height="1" fill="#000000"/><rect x="1" y="13" width="12" height="1" fill="#FFFFFF"/><rect x="13" y="13" width="1" height="1" fill="#000000"/><rect x="0" y="14" width="14" height="1" fill="#000000"/></svg></div>
<div class="btn" style="left:355px"><svg width="16" height="16" viewBox="0 0 16 16" shape-rendering="crispEdges"><rect x="0" y="1" width="14" height="1" fill="#800000"/><rect x="0" y="2" width="14" height="1" fill="#800000"/><rect x="0" y="3" width="14" height="1" fill="#800000"/><rect x="0" y="4" width="1" height="1" fill="#000000"/><rect x="1" y="4" width="12" height="1" fill="#FFFFFF"/><rect x="13" y="4" width="1" height="1" fill="#000000"/><rect x="0" y="5" width="2" height="1" fill="#000000"/><rect x="2" y="5" width="1" height="1" fill="#FFFFFF"/><rect x="3" y="5" width="5" height="1" fill="#000000"/><rect x="8" y="5" width="5" height="1" fill="#FFFFFF"/><rect x="13" y="5" width="1" height="1" fill="#000000"/><rect x="0" y="6" width="2" height="1" fill="#000000"/><rect x="2" y="6" width="1" height="1" fill="#FFFFFF"/><rect x="3" y="6" width="1" height="1" fill="#000000"/><rect x="4" y="6" width="3" height="1" fill="#FFFFFF"/><rect x="7" y="6" width="1" height="1" fill="#000000"/><rect x="8" y="6" width="5" height="1" fill="#FFFFFF"/><rect x="13" y="6" width="1" height="1" fill="#000000"/><rect x="0" y="7" width="2" height="1" fill="#000000"/><rect x="2" y="7" width="1" height="1" fill="#FFFFFF"/><rect x="3" y="7" width="7" height="1" fill="#000000"/><rect x="10" y="7" width="3" height="1" fill="#FFFFFF"/><rect x="13" y="7" width="1" height="1" fill="#000000"/><rect x="0" y="8" width="2" height="1" fill="#000000"/><rect x="2" y="8" width="1" height="1" fill="#1010C0"/><rect x="3" y="8" width="2" height="1" fill="#FFFFFF"/><rect x="5" y="8" width="1" height="1" fill="#000000"/><rect x="6" y="8" width="3" height="1" fill="#FFFFFF"/><rect x="9" y="8" width="1" height="1" fill="#000000"/><rect x="10" y="8" width="3" height="1" fill="#FFFFFF"/><rect x="13" y="8" width="1" height="1" fill="#000000"/><rect x="0" y="9" width="2" height="1" fill="#000000"/><rect x="2" y="9" width="1" height="1" fill="#1010C0"/><rect x="3" y="9" width="2" height="1" fill="#FFFFFF"/><rect x="5" y="9" width="7" height="1" fill="#000000"/><rect x="12" y="9" width="1" height="1" fill="#FFFFFF"/><rect x="13" y="9" width="1" height="1" fill="#000000"/><rect x="0" y="10" width="1" height="1" fill="#000000"/><rect x="1" y="10" width="3" height="1" fill="#1010C0"/><rect x="4" y="10" width="3" height="1" fill="#FFFFFF"/><rect x="7" y="10" width="1" height="1" fill="#000000"/><rect x="8" y="10" width="3" height="1" fill="#FFFFFF"/><rect x="11" y="10" width="1" height="1" fill="#000000"/><rect x="12" y="10" width="1" height="1" fill="#FFFFFF"/><rect x="13" y="10" width="1" height="1" fill="#000000"/><rect x="0" y="11" width="1" height="1" fill="#000000"/><rect x="1" y="11" width="1" height="1" fill="#FFFFFF"/><rect x="2" y="11" width="1" height="1" fill="#1010C0"/><rect x="3" y="11" width="4" height="1" fill="#FFFFFF"/><rect x="7" y="11" width="5" height="1" fill="#000000"/><rect x="12" y="11" width="1" height="1" fill="#FFFFFF"/><rect x="13" y="11" width="1" height="1" fill="#000000"/><rect x="0" y="12" width="1" height="1" fill="#000000"/><rect x="1" y="12" width="12" height="1" fill="#FFFFFF"/><rect x="13" y="12" width="1" height="1" fill="#000000"/><rect x="0" y="13" width="1" height="1" fill="#000000"/><rect x="1" y="13" width="12" height="1" fill="#FFFFFF"/><rect x="13" y="13" width="1" height="1" fill="#000000"/><rect x="0" y="14" width="14" height="1" fill="#000000"/></svg></div>
<div class="btn" style="left:377px"><svg width="16" height="16" viewBox="0 0 16 16" shape-rendering="crispEdges"><rect x="0" y="1" width="14" height="1" fill="#800000"/><rect x="0" y="2" width="14" height="1" fill="#800000"/><rect x="0" y="3" width="14" height="1" fill="#800000"/><rect x="0" y="4" width="1" height="1" fill="#000000"/><rect x="1" y="4" width="12" height="1" fill="#FFFFFF"/><rect x="13" y="4" width="1" height="1" fill="#000000"/><rect x="0" y="5" width="1" height="1" fill="#000000"/><rect x="1" y="5" width="2" height="1" fill="#FFFFFF"/><rect x="3" y="5" width="6" height="1" fill="#000000"/><rect x="9" y="5" width="4" height="1" fill="#FFFFFF"/><rect x="13" y="5" width="1" height="1" fill="#000000"/><rect x="0" y="6" width="1" height="1" fill="#000000"/><rect x="1" y="6" width="1" height="1" fill="#FFFFFF"/><rect x="2" y="6" width="8" height="1" fill="#000000"/><rect x="10" y="6" width="3" height="1" fill="#FFFFFF"/><rect x="13" y="6" width="1" height="1" fill="#000000"/><rect x="0" y="7" width="1" height="1" fill="#000000"/><rect x="1" y="7" width="2" height="1" fill="#FFFFFF"/><rect x="3" y="7" width="6" height="1" fill="#000000"/><rect x="9" y="7" width="4" height="1" fill="#FFFFFF"/><rect x="13" y="7" width="1" height="1" fill="#000000"/><rect x="0" y="8" width="1" height="1" fill="#000000"/><rect x="1" y="8" width="1" height="1" fill="#FFFFFF"/><rect x="2" y="8" width="8" height="1" fill="#000000"/><rect x="10" y="8" width="3" height="1" fill="#FFFFFF"/><rect x="13" y="8" width="1" height="1" fill="#000000"/><rect x="0" y="9" width="1" height="1" fill="#000000"/><rect x="1" y="9" width="2" height="1" fill="#FFFFFF"/><rect x="3" y="9" width="6" height="1" fill="#000000"/><rect x="9" y="9" width="4" height="1" fill="#FFFFFF"/><rect x="13" y="9" width="1" height="1" fill="#000000"/><rect x="0" y="10" width="1" height="1" fill="#000000"/><rect x="1" y="10" width="1" height="1" fill="#FFFFFF"/><rect x="2" y="10" width="8" height="1" fill="#000000"/><rect x="10" y="10" width="3" height="1" fill="#FFFFFF"/><rect x="13" y="10" width="1" height="1" fill="#000000"/><rect x="0" y="11" width="1" height="1" fill="#000000"/><rect x="1" y="11" width="2" height="1" fill="#FFFFFF"/><rect x="3" y="11" width="6" height="1" fill="#000000"/><rect x="9" y="11" width="4" height="1" fill="#FFFFFF"/><rect x="13" y="11" width="1" height="1" fill="#000000"/><rect x="0" y="12" width="1" height="1" fill="#000000"/><rect x="1" y="12" width="1" height="1" fill="#FFFFFF"/><rect x="2" y="12" width="8" height="1" fill="#000000"/><rect x="10" y="12" width="3" height="1" fill="#FFFFFF"/><rect x="13" y="12" width="1" height="1" fill="#000000"/><rect x="0" y="13" width="1" height="1" fill="#000000"/><rect x="1" y="13" width="12" height="1" fill="#FFFFFF"/><rect x="13" y="13" width="1" height="1" fill="#000000"/><rect x="0" y="14" width="14" height="1" fill="#000000"/></svg></div>
<div class="btn" style="left:400px"><svg width="16" height="16" viewBox="0 0 16 16" shape-rendering="crispEdges"><rect x="0" y="1" width="14" height="1" fill="#800000"/><rect x="0" y="2" width="14" height="1" fill="#800000"/><rect x="0" y="3" width="14" height="1" fill="#800000"/><rect x="0" y="4" width="1" height="1" fill="#000000"/><rect x="1" y="4" width="12" height="1" fill="#FFFFFF"/><rect x="13" y="4" width="1" height="1" fill="#000000"/><rect x="0" y="5" width="1" height="1" fill="#000000"/><rect x="1" y="5" width="1" height="1" fill="#FFFFFF"/><rect x="2" y="5" width="4" height="1" fill="#000000"/><rect x="6" y="5" width="7" height="1" fill="#FFFFFF"/><rect x="13" y="5" width="1" height="1" fill="#000000"/><rect x="0" y="6" width="1" height="1" fill="#000000"/><rect x="1" y="6" width="5" height="1" fill="#FFFFFF"/><rect x="6" y="6" width="1" height="1" fill="#000000"/><rect x="7" y="6" width="6" height="1" fill="#FFFFFF"/><rect x="13" y="6" width="1" height="1" fill="#000000"/><rect x="0" y="7" width="1" height="1" fill="#000000"/><rect x="1" y="7" width="1" height="1" fill="#FFFFFF"/><rect x="2" y="7" width="5" height="1" fill="#000000"/><rect x="7" y="7" width="1" height="1" fill="#FFFFFF"/><rect x="8" y="7" width="1" height="1" fill="#000000"/><rect x="9" y="7" width="4" height="1" fill="#FFFFFF"/><rect x="13" y="7" width="1" height="1" fill="#000000"/><rect x="0" y="8" width="2" height="1" fill="#000000"/><rect x="2" y="8" width="4" height="1" fill="#FFFFFF"/><rect x="6" y="8" width="1" height="1" fill="#000000"/><rect x="7" y="8" width="1" height="1" fill="#FFFFFF"/><rect x="8" y="8" width="1" height="1" fill="#000000"/><rect x="9" y="8" width="4" height="1" fill="#FFFFFF"/><rect x="13" y="8" width="1" height="1" fill="#000000"/><rect x="0" y="9" width="1" height="1" fill="#000000"/><rect x="1" y="9" width="1" height="1" fill="#FFFFFF"/><rect x="2" y="9" width="5" height="1" fill="#000000"/><rect x="7" y="9" width="1" height="1" fill="#FFFFFF"/><rect x="8" y="9" width="3" height="1" fill="#000000"/><rect x="11" y="9" width="2" height="1" fill="#FFFFFF"/><rect x="13" y="9" width="1" height="1" fill="#000000"/><rect x="0" y="10" width="1" height="1" fill="#000000"/><rect x="1" y="10" width="7" height="1" fill="#FFFFFF"/><rect x="8" y="10" width="1" height="1" fill="#000000"/><rect x="9" y="10" width="2" height="1" fill="#FFFFFF"/><rect x="11" y="10" width="1" height="1" fill="#000000"/><rect x="12" y="10" width="1" height="1" fill="#FFFFFF"/><rect x="13" y="10" width="1" height="1" fill="#000000"/><rect x="0" y="11" width="1" height="1" fill="#000000"/><rect x="1" y="11" width="7" height="1" fill="#FFFFFF"/><rect x="8" y="11" width="1" height="1" fill="#000000"/><rect x="9" y="11" width="2" height="1" fill="#FFFFFF"/><rect x="11" y="11" width="1" height="1" fill="#000000"/><rect x="12" y="11" width="1" height="1" fill="#FFFFFF"/><rect x="13" y="11" width="1" height="1" fill="#000000"/><rect x="0" y="12" width="1" height="1" fill="#000000"/><rect x="1" y="12" width="7" height="1" fill="#FFFFFF"/><rect x="8" y="12" width="3" height="1" fill="#000000"/><rect x="11" y="12" width="2" height="1" fill="#FFFFFF"/><rect x="13" y="12" width="1" height="1" fill="#000000"/><rect x="0" y="13" width="1" height="1" fill="#000000"/><rect x="1" y="13" width="12" height="1" fill="#FFFFFF"/><rect x="13" y="13" width="1" height="1" fill="#000000"/><rect x="0" y="14" width="14" height="1" fill="#000000"/></svg></div>
<div class="btn" style="left:423px"><svg width="16" height="16" viewBox="0 0 16 16" shape-rendering="crispEdges"><rect x="0" y="1" width="14" height="1" fill="#800000"/><rect x="0" y="2" width="14" height="1" fill="#800000"/><rect x="0" y="3" width="14" height="1" fill="#800000"/><rect x="0" y="4" width="1" height="1" fill="#000000"/><rect x="1" y="4" width="12" height="1" fill="#FFFFFF"/><rect x="13" y="4" width="1" height="1" fill="#000000"/><rect x="0" y="5" width="1" height="1" fill="#000000"/><rect x="1" y="5" width="1" height="1" fill="#FFFFFF"/><rect x="2" y="5" width="4" height="1" fill="#000000"/><rect x="6" y="5" width="7" height="1" fill="#FFFFFF"/><rect x="13" y="5" width="1" height="1" fill="#000000"/><rect x="0" y="6" width="3" height="1" fill="#000000"/><rect x="3" y="6" width="2" height="1" fill="#FFFFFF"/><rect x="5" y="6" width="2" height="1" fill="#000000"/><rect x="7" y="6" width="6" height="1" fill="#FFFFFF"/><rect x="13" y="6" width="1" height="1" fill="#000000"/><rect x="0" y="7" width="2" height="1" fill="#000000"/><rect x="2" y="7" width="4" height="1" fill="#FFFFFF"/><rect x="6" y="7" width="1" height="1" fill="#000000"/><rect x="7" y="7" width="6" height="1" fill="#FFFFFF"/><rect x="13" y="7" width="1" height="1" fill="#000000"/><rect x="0" y="8" width="2" height="1" fill="#000000"/><rect x="2" y="8" width="4" height="1" fill="#FFFFFF"/><rect x="6" y="8" width="1" height="1" fill="#000000"/><rect x="7" y="8" width="6" height="1" fill="#FFFFFF"/><rect x="13" y="8" width="1" height="1" fill="#000000"/><rect x="0" y="9" width="3" height="1" fill="#000000"/><rect x="3" y="9" width="2" height="1" fill="#FFFFFF"/><rect x="5" y="9" width="2" height="1" fill="#000000"/><rect x="7" y="9" width="6" height="1" fill="#FFFFFF"/><rect x="13" y="9" width="1" height="1" fill="#000000"/><rect x="0" y="10" width="1" height="1" fill="#000000"/><rect x="1" y="10" width="1" height="1" fill="#FFFFFF"/><rect x="2" y="10" width="4" height="1" fill="#000000"/><rect x="6" y="10" width="2" height="1" fill="#800000"/><rect x="8" y="10" width="5" height="1" fill="#FFFFFF"/><rect x="13" y="10" width="1" height="1" fill="#000000"/><rect x="0" y="11" width="1" height="1" fill="#000000"/><rect x="1" y="11" width="6" height="1" fill="#FFFFFF"/><rect x="7" y="11" width="2" height="1" fill="#800000"/><rect x="9" y="11" width="4" height="1" fill="#FFFFFF"/><rect x="13" y="11" width="1" height="1" fill="#000000"/><rect x="0" y="12" width="1" height="1" fill="#000000"/><rect x="1" y="12" width="7" height="1" fill="#FFFFFF"/><rect x="8" y="12" width="2" height="1" fill="#800000"/><rect x="10" y="12" width="3" height="1" fill="#FFFFFF"/><rect x="13" y="12" width="1" height="1" fill="#000000"/><rect x="0" y="13" width="1" height="1" fill="#000000"/><rect x="1" y="13" width="8" height="1" fill="#FFFFFF"/><rect x="9" y="13" width="1" height="1" fill="#800000"/><rect x="10" y="13" width="3" height="1" fill="#FFFFFF"/><rect x="13" y="13" width="1" height="1" fill="#000000"/><rect x="0" y="14" width="14" height="1" fill="#000000"/></svg></div>
<div class="a" style="left:452px;top:48px;width:1px;height:26px;background:#ACA899"></div>
<div class="a" style="left:453px;top:48px;width:1px;height:26px;background:#fff"></div>
<div class="a" style="left:461px;top:48px;width:1px;height:26px;background:#000"></div>
<div class="a" style="left:462px;top:48px;width:1px;height:26px;background:#ACA899"></div>
<div class="btn p" style="left:470px"><svg width="16" height="16" viewBox="0 0 16 16" shape-rendering="crispEdges"><rect x="1" y="2" width="14" height="1" fill="#000080"/><rect x="1" y="3" width="14" height="1" fill="#000080"/><rect x="1" y="4" width="14" height="1" fill="#000080"/><rect x="1" y="5" width="1" height="1" fill="#000000"/><rect x="2" y="5" width="12" height="1" fill="#FFFFFF"/><rect x="14" y="5" width="1" height="1" fill="#000000"/><rect x="1" y="6" width="1" height="1" fill="#000000"/><rect x="2" y="6" width="2" height="1" fill="#FFFFFF"/><rect x="4" y="6" width="1" height="1" fill="#000000"/><rect x="5" y="6" width="9" height="1" fill="#FFFFFF"/><rect x="14" y="6" width="1" height="1" fill="#000000"/><rect x="1" y="7" width="1" height="1" fill="#000000"/><rect x="2" y="7" width="2" height="1" fill="#FFFFFF"/><rect x="4" y="7" width="1" height="1" fill="#000000"/><rect x="5" y="7" width="6" height="1" fill="#FFFFFF"/><rect x="11" y="7" width="2" height="1" fill="#000000"/><rect x="13" y="7" width="1" height="1" fill="#FFFFFF"/><rect x="14" y="7" width="1" height="1" fill="#000000"/><rect x="1" y="8" width="1" height="1" fill="#000000"/><rect x="2" y="8" width="2" height="1" fill="#FFFFFF"/><rect x="4" y="8" width="1" height="1" fill="#000000"/><rect x="5" y="8" width="1" height="1" fill="#FFFFFF"/><rect x="6" y="8" width="3" height="1" fill="#000000"/><rect x="9" y="8" width="5" height="1" fill="#FFFFFF"/><rect x="14" y="8" width="1" height="1" fill="#000000"/><rect x="1" y="9" width="1" height="1" fill="#000000"/><rect x="2" y="9" width="2" height="1" fill="#FFFFFF"/><rect x="4" y="9" width="1" height="1" fill="#000000"/><rect x="5" y="9" width="1" height="1" fill="#FFFFFF"/><rect x="6" y="9" width="1" height="1" fill="#000000"/><rect x="7" y="9" width="7" height="1" fill="#FFFFFF"/><rect x="14" y="9" width="1" height="1" fill="#000000"/><rect x="1" y="10" width="1" height="1" fill="#000000"/><rect x="2" y="10" width="2" height="1" fill="#FFFFFF"/><rect x="4" y="10" width="1" height="1" fill="#000000"/><rect x="5" y="10" width="1" height="1" fill="#FFFFFF"/><rect x="6" y="10" width="4" height="1" fill="#000000"/><rect x="10" y="10" width="1" height="1" fill="#FFFFFF"/><rect x="11" y="10" width="2" height="1" fill="#000000"/><rect x="13" y="10" width="1" height="1" fill="#FFFFFF"/><rect x="14" y="10" width="1" height="1" fill="#000000"/><rect x="1" y="11" width="1" height="1" fill="#000000"/><rect x="2" y="11" width="2" height="1" fill="#FFFFFF"/><rect x="4" y="11" width="1" height="1" fill="#000000"/><rect x="5" y="11" width="9" height="1" fill="#FFFFFF"/><rect x="14" y="11" width="1" height="1" fill="#000000"/><rect x="1" y="12" width="1" height="1" fill="#000000"/><rect x="2" y="12" width="2" height="1" fill="#FFFFFF"/><rect x="4" y="12" width="1" height="1" fill="#000000"/><rect x="5" y="12" width="9" height="1" fill="#FFFFFF"/><rect x="14" y="12" width="1" height="1" fill="#000000"/><rect x="1" y="13" width="1" height="1" fill="#000000"/><rect x="2" y="13" width="2" height="1" fill="#FFFFFF"/><rect x="4" y="13" width="5" height="1" fill="#000000"/><rect x="9" y="13" width="2" height="1" fill="#FFFFFF"/><rect x="11" y="13" width="2" height="1" fill="#000000"/><rect x="13" y="13" width="1" height="1" fill="#FFFFFF"/><rect x="14" y="13" width="1" height="1" fill="#000000"/><rect x="1" y="14" width="1" height="1" fill="#000000"/><rect x="2" y="14" width="12" height="1" fill="#FFFFFF"/><rect x="14" y="14" width="1" height="1" fill="#000000"/><rect x="1" y="15" width="14" height="1" fill="#000000"/></svg></div>
<div class="btn" style="left:493px"><svg width="16" height="16" viewBox="0 0 16 16" shape-rendering="crispEdges"><rect x="1" y="2" width="14" height="1" fill="#000080"/><rect x="1" y="3" width="14" height="1" fill="#000080"/><rect x="1" y="4" width="14" height="1" fill="#000080"/><rect x="1" y="5" width="1" height="1" fill="#000000"/><rect x="2" y="5" width="12" height="1" fill="#FFFFFF"/><rect x="14" y="5" width="1" height="1" fill="#000000"/><rect x="1" y="6" width="1" height="1" fill="#000000"/><rect x="2" y="6" width="12" height="1" fill="#FFFFFF"/><rect x="14" y="6" width="1" height="1" fill="#000000"/><rect x="1" y="7" width="1" height="1" fill="#000000"/><rect x="2" y="7" width="3" height="1" fill="#FFFFFF"/><rect x="5" y="7" width="2" height="1" fill="#000000"/><rect x="7" y="7" width="1" height="1" fill="#FFFFFF"/><rect x="8" y="7" width="3" height="1" fill="#000000"/><rect x="11" y="7" width="3" height="1" fill="#FFFFFF"/><rect x="14" y="7" width="1" height="1" fill="#000000"/><rect x="1" y="8" width="1" height="1" fill="#000000"/><rect x="2" y="8" width="4" height="1" fill="#FFFFFF"/><rect x="6" y="8" width="3" height="1" fill="#000000"/><rect x="9" y="8" width="1" height="1" fill="#FFFFFF"/><rect x="10" y="8" width="2" height="1" fill="#000000"/><rect x="12" y="8" width="2" height="1" fill="#FFFFFF"/><rect x="14" y="8" width="1" height="1" fill="#000000"/><rect x="1" y="9" width="1" height="1" fill="#000000"/><rect x="2" y="9" width="4" height="1" fill="#FFFFFF"/><rect x="6" y="9" width="2" height="1" fill="#000000"/><rect x="8" y="9" width="6" height="1" fill="#FFFFFF"/><rect x="14" y="9" width="1" height="1" fill="#000000"/><rect x="1" y="10" width="1" height="1" fill="#000000"/><rect x="2" y="10" width="4" height="1" fill="#FFFFFF"/><rect x="6" y="10" width="2" height="1" fill="#000000"/><rect x="8" y="10" width="6" height="1" fill="#FFFFFF"/><rect x="14" y="10" width="1" height="1" fill="#000000"/><rect x="1" y="11" width="1" height="1" fill="#000000"/><rect x="2" y="11" width="4" height="1" fill="#FFFFFF"/><rect x="6" y="11" width="2" height="1" fill="#000000"/><rect x="8" y="11" width="6" height="1" fill="#FFFFFF"/><rect x="14" y="11" width="1" height="1" fill="#000000"/><rect x="1" y="12" width="1" height="1" fill="#000000"/><rect x="2" y="12" width="3" height="1" fill="#FFFFFF"/><rect x="5" y="12" width="4" height="1" fill="#000000"/><rect x="9" y="12" width="5" height="1" fill="#FFFFFF"/><rect x="14" y="12" width="1" height="1" fill="#000000"/><rect x="1" y="13" width="1" height="1" fill="#000000"/><rect x="2" y="13" width="12" height="1" fill="#FFFFFF"/><rect x="14" y="13" width="1" height="1" fill="#000000"/><rect x="1" y="14" width="1" height="1" fill="#000000"/><rect x="2" y="14" width="12" height="1" fill="#FFFFFF"/><rect x="14" y="14" width="1" height="1" fill="#000000"/><rect x="1" y="15" width="14" height="1" fill="#000000"/></svg></div>
<div class="btn" style="left:516px"><svg width="16" height="16" viewBox="0 0 16 16" shape-rendering="crispEdges"><rect x="1" y="2" width="14" height="1" fill="#000080"/><rect x="1" y="3" width="14" height="1" fill="#000080"/><rect x="1" y="4" width="14" height="1" fill="#000080"/><rect x="1" y="5" width="1" height="1" fill="#000000"/><rect x="2" y="5" width="12" height="1" fill="#007000"/><rect x="14" y="5" width="1" height="1" fill="#000000"/><rect x="1" y="6" width="1" height="1" fill="#000000"/><rect x="2" y="6" width="12" height="1" fill="#007000"/><rect x="14" y="6" width="1" height="1" fill="#000000"/><rect x="1" y="7" width="1" height="1" fill="#000000"/><rect x="2" y="7" width="3" height="1" fill="#007000"/><rect x="5" y="7" width="3" height="1" fill="#E0FFE0"/><rect x="8" y="7" width="6" height="1" fill="#007000"/><rect x="14" y="7" width="1" height="1" fill="#000000"/><rect x="1" y="8" width="1" height="1" fill="#000000"/><rect x="2" y="8" width="2" height="1" fill="#007000"/><rect x="4" y="8" width="1" height="1" fill="#E0FFE0"/><rect x="5" y="8" width="3" height="1" fill="#007000"/><rect x="8" y="8" width="1" height="1" fill="#E0FFE0"/><rect x="9" y="8" width="5" height="1" fill="#007000"/><rect x="14" y="8" width="1" height="1" fill="#000000"/><rect x="1" y="9" width="1" height="1" fill="#000000"/><rect x="2" y="9" width="2" height="1" fill="#007000"/><rect x="4" y="9" width="1" height="1" fill="#E0FFE0"/><rect x="5" y="9" width="3" height="1" fill="#007000"/><rect x="8" y="9" width="1" height="1" fill="#E0FFE0"/><rect x="9" y="9" width="5" height="1" fill="#007000"/><rect x="14" y="9" width="1" height="1" fill="#000000"/><rect x="1" y="10" width="1" height="1" fill="#000000"/><rect x="2" y="10" width="2" height="1" fill="#007000"/><rect x="4" y="10" width="1" height="1" fill="#E0FFE0"/><rect x="5" y="10" width="3" height="1" fill="#007000"/><rect x="8" y="10" width="1" height="1" fill="#E0FFE0"/><rect x="9" y="10" width="5" height="1" fill="#007000"/><rect x="14" y="10" width="1" height="1" fill="#000000"/><rect x="1" y="11" width="1" height="1" fill="#000000"/><rect x="2" y="11" width="3" height="1" fill="#007000"/><rect x="5" y="11" width="5" height="1" fill="#E0FFE0"/><rect x="10" y="11" width="4" height="1" fill="#007000"/><rect x="14" y="11" width="1" height="1" fill="#000000"/><rect x="1" y="12" width="1" height="1" fill="#000000"/><rect x="2" y="12" width="7" height="1" fill="#007000"/><rect x="9" y="12" width="2" height="1" fill="#E0FFE0"/><rect x="11" y="12" width="3" height="1" fill="#007000"/><rect x="14" y="12" width="1" height="1" fill="#000000"/><rect x="1" y="13" width="1" height="1" fill="#000000"/><rect x="2" y="13" width="8" height="1" fill="#007000"/><rect x="10" y="13" width="2" height="1" fill="#E0FFE0"/><rect x="12" y="13" width="2" height="1" fill="#007000"/><rect x="14" y="13" width="1" height="1" fill="#000000"/><rect x="1" y="14" width="1" height="1" fill="#000000"/><rect x="2" y="14" width="12" height="1" fill="#007000"/><rect x="14" y="14" width="1" height="1" fill="#000000"/><rect x="1" y="15" width="14" height="1" fill="#000000"/></svg></div>
<div class="btn p" style="left:539px"><svg width="16" height="16" viewBox="0 0 16 16" shape-rendering="crispEdges"><rect x="1" y="2" width="14" height="1" fill="#000080"/><rect x="1" y="3" width="14" height="1" fill="#000080"/><rect x="1" y="4" width="14" height="1" fill="#000080"/><rect x="1" y="5" width="1" height="1" fill="#000000"/><rect x="2" y="5" width="12" height="1" fill="#FFFFFF"/><rect x="14" y="5" width="1" height="1" fill="#000000"/><rect x="1" y="6" width="1" height="1" fill="#000000"/><rect x="2" y="6" width="12" height="1" fill="#FFFFFF"/><rect x="14" y="6" width="1" height="1" fill="#000000"/><rect x="1" y="7" width="1" height="1" fill="#000000"/><rect x="2" y="7" width="2" height="1" fill="#FFFFFF"/><rect x="4" y="7" width="1" height="1" fill="#1010C0"/><rect x="5" y="7" width="2" height="1" fill="#FFFFFF"/><rect x="7" y="7" width="5" height="1" fill="#000000"/><rect x="12" y="7" width="2" height="1" fill="#FFFFFF"/><rect x="14" y="7" width="1" height="1" fill="#000000"/><rect x="1" y="8" width="1" height="1" fill="#000000"/><rect x="2" y="8" width="2" height="1" fill="#FFFFFF"/><rect x="4" y="8" width="1" height="1" fill="#1010C0"/><rect x="5" y="8" width="9" height="1" fill="#FFFFFF"/><rect x="14" y="8" width="1" height="1" fill="#000000"/><rect x="1" y="9" width="1" height="1" fill="#000000"/><rect x="2" y="9" width="2" height="1" fill="#FFFFFF"/><rect x="4" y="9" width="1" height="1" fill="#1010C0"/><rect x="5" y="9" width="2" height="1" fill="#FFFFFF"/><rect x="7" y="9" width="5" height="1" fill="#000000"/><rect x="12" y="9" width="2" height="1" fill="#FFFFFF"/><rect x="14" y="9" width="1" height="1" fill="#000000"/><rect x="1" y="10" width="1" height="1" fill="#000000"/><rect x="2" y="10" width="2" height="1" fill="#FFFFFF"/><rect x="4" y="10" width="1" height="1" fill="#1010C0"/><rect x="5" y="10" width="9" height="1" fill="#FFFFFF"/><rect x="14" y="10" width="1" height="1" fill="#000000"/><rect x="1" y="11" width="1" height="1" fill="#000000"/><rect x="2" y="11" width="1" height="1" fill="#FFFFFF"/><rect x="3" y="11" width="3" height="1" fill="#1010C0"/><rect x="6" y="11" width="1" height="1" fill="#FFFFFF"/><rect x="7" y="11" width="5" height="1" fill="#000000"/><rect x="12" y="11" width="2" height="1" fill="#FFFFFF"/><rect x="14" y="11" width="1" height="1" fill="#000000"/><rect x="1" y="12" width="1" height="1" fill="#000000"/><rect x="2" y="12" width="2" height="1" fill="#FFFFFF"/><rect x="4" y="12" width="1" height="1" fill="#1010C0"/><rect x="5" y="12" width="9" height="1" fill="#FFFFFF"/><rect x="14" y="12" width="1" height="1" fill="#000000"/><rect x="1" y="13" width="1" height="1" fill="#000000"/><rect x="2" y="13" width="5" height="1" fill="#FFFFFF"/><rect x="7" y="13" width="5" height="1" fill="#000000"/><rect x="12" y="13" width="2" height="1" fill="#FFFFFF"/><rect x="14" y="13" width="1" height="1" fill="#000000"/><rect x="1" y="14" width="1" height="1" fill="#000000"/><rect x="2" y="14" width="12" height="1" fill="#FFFFFF"/><rect x="14" y="14" width="1" height="1" fill="#000000"/><rect x="1" y="15" width="14" height="1" fill="#000000"/></svg></div>
<div class="btn" style="left:562px"><svg width="16" height="16" viewBox="0 0 16 16" shape-rendering="crispEdges"><rect x="1" y="2" width="14" height="1" fill="#000080"/><rect x="1" y="3" width="14" height="1" fill="#000080"/><rect x="1" y="4" width="14" height="1" fill="#000080"/><rect x="1" y="5" width="1" height="1" fill="#000000"/><rect x="2" y="5" width="12" height="1" fill="#FFFFFF"/><rect x="14" y="5" width="1" height="1" fill="#000000"/><rect x="1" y="6" width="1" height="1" fill="#000000"/><rect x="2" y="6" width="12" height="1" fill="#FFFFFF"/><rect x="14" y="6" width="1" height="1" fill="#000000"/><rect x="1" y="7" width="2" height="1" fill="#000000"/><rect x="3" y="7" width="11" height="1" fill="#FFFFFF"/><rect x="14" y="7" width="1" height="1" fill="#000000"/><rect x="1" y="8" width="1" height="1" fill="#000000"/><rect x="2" y="8" width="1" height="1" fill="#FFFFFF"/><rect x="3" y="8" width="1" height="1" fill="#000000"/><rect x="4" y="8" width="10" height="1" fill="#FFFFFF"/><rect x="14" y="8" width="1" height="1" fill="#000000"/><rect x="1" y="9" width="1" height="1" fill="#000000"/><rect x="2" y="9" width="2" height="1" fill="#FFFFFF"/><rect x="4" y="9" width="1" height="1" fill="#000000"/><rect x="5" y="9" width="9" height="1" fill="#FFFFFF"/><rect x="14" y="9" width="1" height="1" fill="#000000"/><rect x="1" y="10" width="1" height="1" fill="#000000"/><rect x="2" y="10" width="1" height="1" fill="#FFFFFF"/><rect x="3" y="10" width="1" height="1" fill="#000000"/><rect x="4" y="10" width="10" height="1" fill="#FFFFFF"/><rect x="14" y="10" width="1" height="1" fill="#000000"/><rect x="1" y="11" width="2" height="1" fill="#000000"/><rect x="3" y="11" width="3" height="1" fill="#FFFFFF"/><rect x="6" y="11" width="4" height="1" fill="#000000"/><rect x="10" y="11" width="4" height="1" fill="#FFFFFF"/><rect x="14" y="11" width="1" height="1" fill="#000000"/><rect x="1" y="12" width="1" height="1" fill="#000000"/><rect x="2" y="12" width="12" height="1" fill="#FFFFFF"/><rect x="14" y="12" width="1" height="1" fill="#000000"/><rect x="1" y="13" width="1" height="1" fill="#000000"/><rect x="2" y="13" width="12" height="1" fill="#FFFFFF"/><rect x="14" y="13" width="1" height="1" fill="#000000"/><rect x="1" y="14" width="1" height="1" fill="#000000"/><rect x="2" y="14" width="12" height="1" fill="#FFFFFF"/><rect x="14" y="14" width="1" height="1" fill="#000000"/><rect x="1" y="15" width="14" height="1" fill="#000000"/></svg></div>
<div class="btn" style="left:585px"><svg width="16" height="16" viewBox="0 0 16 16" shape-rendering="crispEdges"><rect x="1" y="2" width="14" height="1" fill="#000080"/><rect x="1" y="3" width="14" height="1" fill="#000080"/><rect x="1" y="4" width="14" height="1" fill="#000080"/><rect x="1" y="5" width="1" height="1" fill="#000000"/><rect x="2" y="5" width="12" height="1" fill="#FFFFFF"/><rect x="14" y="5" width="1" height="1" fill="#000000"/><rect x="1" y="6" width="1" height="1" fill="#000000"/><rect x="2" y="6" width="12" height="1" fill="#FFFFFF"/><rect x="14" y="6" width="1" height="1" fill="#000000"/><rect x="1" y="7" width="1" height="1" fill="#000000"/><rect x="2" y="7" width="5" height="1" fill="#FFFFFF"/><rect x="7" y="7" width="5" height="1" fill="#000000"/><rect x="12" y="7" width="2" height="1" fill="#FFFFFF"/><rect x="14" y="7" width="1" height="1" fill="#000000"/><rect x="1" y="8" width="1" height="1" fill="#000000"/><rect x="2" y="8" width="1" height="1" fill="#FFFFFF"/><rect x="3" y="8" width="3" height="1" fill="#E00000"/><rect x="6" y="8" width="8" height="1" fill="#FFFFFF"/><rect x="14" y="8" width="1" height="1" fill="#000000"/><rect x="1" y="9" width="1" height="1" fill="#000000"/><rect x="2" y="9" width="5" height="1" fill="#E00000"/><rect x="7" y="9" width="5" height="1" fill="#000000"/><rect x="12" y="9" width="2" height="1" fill="#FFFFFF"/><rect x="14" y="9" width="1" height="1" fill="#000000"/><rect x="1" y="10" width="1" height="1" fill="#000000"/><rect x="2" y="10" width="5" height="1" fill="#E00000"/><rect x="7" y="10" width="7" height="1" fill="#FFFFFF"/><rect x="14" y="10" width="1" height="1" fill="#000000"/><rect x="1" y="11" width="1" height="1" fill="#000000"/><rect x="2" y="11" width="1" height="1" fill="#FFFFFF"/><rect x="3" y="11" width="3" height="1" fill="#E00000"/><rect x="6" y="11" width="1" height="1" fill="#FFFFFF"/><rect x="7" y="11" width="5" height="1" fill="#000000"/><rect x="12" y="11" width="2" height="1" fill="#FFFFFF"/><rect x="14" y="11" width="1" height="1" fill="#000000"/><rect x="1" y="12" width="1" height="1" fill="#000000"/><rect x="2" y="12" width="12" height="1" fill="#FFFFFF"/><rect x="14" y="12" width="1" height="1" fill="#000000"/><rect x="1" y="13" width="1" height="1" fill="#000000"/><rect x="2" y="13" width="12" height="1" fill="#FFFFFF"/><rect x="14" y="13" width="1" height="1" fill="#000000"/><rect x="1" y="14" width="1" height="1" fill="#000000"/><rect x="2" y="14" width="12" height="1" fill="#FFFFFF"/><rect x="14" y="14" width="1" height="1" fill="#000000"/><rect x="1" y="15" width="14" height="1" fill="#000000"/></svg></div>
<div class="btn" style="left:608px"><svg width="16" height="16" viewBox="0 0 16 16" shape-rendering="crispEdges"><rect x="1" y="2" width="14" height="1" fill="#000080"/><rect x="1" y="3" width="14" height="1" fill="#000080"/><rect x="1" y="4" width="14" height="1" fill="#000080"/><rect x="1" y="5" width="1" height="1" fill="#000000"/><rect x="2" y="5" width="12" height="1" fill="#FFFFFF"/><rect x="14" y="5" width="1" height="1" fill="#000000"/><rect x="1" y="6" width="1" height="1" fill="#000000"/><rect x="2" y="6" width="12" height="1" fill="#FFFFFF"/><rect x="14" y="6" width="1" height="1" fill="#000000"/><rect x="1" y="7" width="1" height="1" fill="#000000"/><rect x="2" y="7" width="5" height="1" fill="#FFFFFF"/><rect x="7" y="7" width="5" height="1" fill="#000000"/><rect x="12" y="7" width="2" height="1" fill="#FFFFFF"/><rect x="14" y="7" width="1" height="1" fill="#000000"/><rect x="1" y="8" width="1" height="1" fill="#000000"/><rect x="2" y="8" width="1" height="1" fill="#FFFFFF"/><rect x="3" y="8" width="3" height="1" fill="#00E000"/><rect x="6" y="8" width="8" height="1" fill="#FFFFFF"/><rect x="14" y="8" width="1" height="1" fill="#000000"/><rect x="1" y="9" width="1" height="1" fill="#000000"/><rect x="2" y="9" width="5" height="1" fill="#00E000"/><rect x="7" y="9" width="5" height="1" fill="#000000"/><rect x="12" y="9" width="2" height="1" fill="#FFFFFF"/><rect x="14" y="9" width="1" height="1" fill="#000000"/><rect x="1" y="10" width="1" height="1" fill="#000000"/><rect x="2" y="10" width="5" height="1" fill="#00E000"/><rect x="7" y="10" width="7" height="1" fill="#FFFFFF"/><rect x="14" y="10" width="1" height="1" fill="#000000"/><rect x="1" y="11" width="1" height="1" fill="#000000"/><rect x="2" y="11" width="1" height="1" fill="#FFFFFF"/><rect x="3" y="11" width="3" height="1" fill="#00E000"/><rect x="6" y="11" width="1" height="1" fill="#FFFFFF"/><rect x="7" y="11" width="5" height="1" fill="#000000"/><rect x="12" y="11" width="2" height="1" fill="#FFFFFF"/><rect x="14" y="11" width="1" height="1" fill="#000000"/><rect x="1" y="12" width="1" height="1" fill="#000000"/><rect x="2" y="12" width="12" height="1" fill="#FFFFFF"/><rect x="14" y="12" width="1" height="1" fill="#000000"/><rect x="1" y="13" width="1" height="1" fill="#000000"/><rect x="2" y="13" width="12" height="1" fill="#FFFFFF"/><rect x="14" y="13" width="1" height="1" fill="#000000"/><rect x="1" y="14" width="1" height="1" fill="#000000"/><rect x="2" y="14" width="12" height="1" fill="#FFFFFF"/><rect x="14" y="14" width="1" height="1" fill="#000000"/><rect x="1" y="15" width="14" height="1" fill="#000000"/></svg></div>
<div class="a" style="left:638px;top:48px;width:1px;height:26px;background:#ACA899"></div>
<div class="a" style="left:639px;top:48px;width:1px;height:26px;background:#fff"></div>
<div class="a" style="left:646px;top:48px;width:1px;height:26px;background:#000"></div>
<div class="a" style="left:647px;top:48px;width:1px;height:26px;background:#ACA899"></div>
<div class="btn" style="left:655px"><svg width="16" height="16" viewBox="0 0 16 16" shape-rendering="crispEdges"><rect x="5" y="1" width="5" height="1" fill="#000000"/><rect x="3" y="2" width="2" height="1" fill="#000000"/><rect x="5" y="2" width="5" height="1" fill="#FFFF40"/><rect x="10" y="2" width="2" height="1" fill="#000000"/><rect x="2" y="3" width="1" height="1" fill="#000000"/><rect x="3" y="3" width="2" height="1" fill="#FFFF40"/><rect x="5" y="3" width="5" height="1" fill="#000000"/><rect x="10" y="3" width="2" height="1" fill="#FFFF40"/><rect x="12" y="3" width="1" height="1" fill="#000000"/><rect x="2" y="4" width="1" height="1" fill="#000000"/><rect x="3" y="4" width="2" height="1" fill="#FFFF40"/><rect x="5" y="4" width="1" height="1" fill="#000000"/><rect x="10" y="4" width="1" height="1" fill="#000000"/><rect x="11" y="4" width="2" height="1" fill="#FFFF40"/><rect x="13" y="4" width="1" height="1" fill="#000000"/><rect x="2" y="5" width="4" height="1" fill="#000000"/><rect x="10" y="5" width="1" height="1" fill="#000000"/><rect x="11" y="5" width="2" height="1" fill="#FFFF40"/><rect x="13" y="5" width="1" height="1" fill="#000000"/><rect x="9" y="6" width="1" height="1" fill="#000000"/><rect x="10" y="6" width="2" height="1" fill="#FFFF40"/><rect x="12" y="6" width="1" height="1" fill="#000000"/><rect x="8" y="7" width="1" height="1" fill="#000000"/><rect x="9" y="7" width="2" height="1" fill="#FFFF40"/><rect x="11" y="7" width="1" height="1" fill="#000000"/><rect x="7" y="8" width="1" height="1" fill="#000000"/><rect x="8" y="8" width="2" height="1" fill="#FFFF40"/><rect x="10" y="8" width="1" height="1" fill="#000000"/><rect x="7" y="9" width="1" height="1" fill="#000000"/><rect x="8" y="9" width="2" height="1" fill="#FFFF40"/><rect x="10" y="9" width="1" height="1" fill="#000000"/><rect x="7" y="10" width="1" height="1" fill="#000000"/><rect x="8" y="10" width="1" height="1" fill="#FFFF40"/><rect x="9" y="10" width="1" height="1" fill="#000000"/><rect x="8" y="11" width="1" height="1" fill="#000000"/><rect x="7" y="12" width="3" height="1" fill="#000000"/><rect x="6" y="13" width="1" height="1" fill="#000000"/><rect x="7" y="13" width="3" height="1" fill="#FFFF40"/><rect x="10" y="13" width="1" height="1" fill="#000000"/><rect x="7" y="14" width="3" height="1" fill="#000000"/></svg></div>
<div class="btn" style="left:678px"><svg width="16" height="16" viewBox="0 0 16 16" shape-rendering="crispEdges"><rect x="10" y="1" width="4" height="1" fill="#000080"/><rect x="1" y="2" width="1" height="1" fill="#000000"/><rect x="9" y="2" width="6" height="1" fill="#000080"/><rect x="1" y="3" width="2" height="1" fill="#000000"/><rect x="9" y="3" width="2" height="1" fill="#000080"/><rect x="13" y="3" width="2" height="1" fill="#000080"/><rect x="1" y="4" width="3" height="1" fill="#000000"/><rect x="12" y="4" width="3" height="1" fill="#000080"/><rect x="1" y="5" width="4" height="1" fill="#000000"/><rect x="11" y="5" width="3" height="1" fill="#000080"/><rect x="1" y="6" width="5" height="1" fill="#000000"/><rect x="11" y="6" width="2" height="1" fill="#000080"/><rect x="1" y="7" width="6" height="1" fill="#000000"/><rect x="11" y="7" width="2" height="1" fill="#000080"/><rect x="1" y="8" width="7" height="1" fill="#000000"/><rect x="1" y="9" width="5" height="1" fill="#000000"/><rect x="11" y="9" width="2" height="1" fill="#000080"/><rect x="1" y="10" width="2" height="1" fill="#000000"/><rect x="4" y="10" width="3" height="1" fill="#000000"/><rect x="11" y="10" width="2" height="1" fill="#000080"/><rect x="1" y="11" width="1" height="1" fill="#000000"/><rect x="4" y="11" width="3" height="1" fill="#000000"/><rect x="5" y="12" width="3" height="1" fill="#000000"/><rect x="5" y="13" width="3" height="1" fill="#000000"/><rect x="6" y="14" width="1" height="1" fill="#000000"/></svg></div>
<div class="a" style="left:708px;top:48px;width:1px;height:26px;background:#ACA899"></div>
<div class="a" style="left:709px;top:48px;width:1px;height:26px;background:#fff"></div>
<div class="a" style="left:0px;top:74px;width:715px;height:1px;background:#A8A698"></div>
<div class="a" style="left:0px;top:75px;width:715px;height:1px;background:#FAFAF4"></div>
<div class="a ui" style="left:4px;top:79px;">ARM7TDMI - Watch</div>
<div class="a" style="left:54px;top:95px;width:46px;height:20px;border-left:1px solid #F8F7F0;border-top:1px solid #F8F7F0;border-right:2px solid #8E8B7C;border-top-right-radius:2px;box-shadow:inset -1px 0 0 #C8C5B6"></div>
<div class="a ui" style="left:58px;top:97px;">Tab 2</div>
<div class="a" style="left:100px;top:95px;width:47px;height:20px;border-left:1px solid #F8F7F0;border-top:1px solid #F8F7F0;border-right:2px solid #8E8B7C;border-top-right-radius:2px;box-shadow:inset -1px 0 0 #C8C5B6"></div>
<div class="a ui" style="left:106px;top:97px;">Tab 3</div>
<div class="a" style="left:147px;top:95px;width:48px;height:20px;border-left:1px solid #F8F7F0;border-top:1px solid #F8F7F0;border-right:2px solid #8E8B7C;border-top-right-radius:2px;box-shadow:inset -1px 0 0 #C8C5B6"></div>
<div class="a ui" style="left:154px;top:97px;">Tab 4</div>
<div class="a" style="left:3px;top:93px;width:51px;height:22px;border-left:1px solid #F8F7F0;border-top:1px solid #F8F7F0;border-right:2px solid #8E8B7C;border-top-right-radius:2px;box-shadow:inset -1px 0 0 #C8C5B6"></div>
<div class="a ui" style="left:10px;top:96px;">Tab 1</div>
<div class="a" style="left:7px;top:115px;width:332px;height:304px;background:#fff;border:1px solid #7A7868;border-top-color:#F8F7F2;box-shadow:inset -1px -1px 0 #F2F0E6,inset -2px -2px 0 #F8F7F2"></div>
<div class="a" style="left:7px;top:115px;width:327px;height:1px;background:#7A7868"></div>
<div class="a" style="left:338px;top:112px;width:1px;height:3px;background:#7A7868"></div>
<div class="a" style="left:3px;top:413px;width:5px;height:5px;background:#F6F5EE"></div>
<div class="a" style="left:7px;top:413px;width:1px;height:5px;background:#F0EFE6"></div>
<div class="a" style="left:2px;top:418px;width:337px;height:1px;background:#7A7868"></div>
<div class="a" style="left:8px;top:116px;width:325px;height:18px;background:#ECE9D8;border-bottom:1px solid #ACA899;border-top:1px solid #F4F3EC;border-right:1px solid #ACA899"></div>
<div class="a" style="left:169px;top:117px;width:1px;height:15px;background:#ACA899"></div>
<div class="a" style="left:170px;top:117px;width:1px;height:15px;background:#fff"></div>
<div class="a code" style="left:14px;top:121px;">Watch</div>
<div class="a code" style="left:177px;top:121px;">Value</div>
<div class="a code" style="left:23px;top:139px;">n</div>
<div class="a code" style="left:171px;top:139px;">0x0000000C</div>
<div class="a" style="left:0px;top:422px;width:342px;height:1px;background:#ACA899"></div>
<div class="a" style="left:0px;top:424px;width:342px;height:1px;background:#FAF9F4"></div>
<div class="a" style="left:0px;top:425px;width:342px;height:1px;background:#D8D5C8"></div>
<div class="a" style="left:0px;top:430px;width:341px;height:1px;background:#000"></div>
<div class="a" style="left:2px;top:76px;width:1px;height:342px;background:#F8F7F0"></div>
<div class="a" style="left:342px;top:76px;width:1px;height:489px;background:#A8A498"></div>
<div class="a" style="left:343px;top:76px;width:1px;height:489px;background:#FAF9F4"></div>
<div class="a" style="left:0px;top:563px;width:342px;height:1px;background:#FAF9F4"></div>
<div class="a" style="left:5px;top:438px;width:46px;height:19px;border-left:1px solid #F8F7F0;border-top:1px solid #F8F7F0;border-right:2px solid #8E8B7C;border-top-right-radius:2px;box-shadow:inset -1px 0 0 #C8C5B6"></div>
<div class="a ui" style="left:10px;top:440px;">Target</div>
<div class="a" style="left:101px;top:438px;width:46px;height:19px;border-left:1px solid #F8F7F0;border-top:1px solid #F8F7F0;border-right:2px solid #8E8B7C;border-top-right-radius:2px;box-shadow:inset -1px 0 0 #C8C5B6"></div>
<div class="a ui" style="left:106px;top:440px;">Files</div>
<div class="a" style="left:147px;top:438px;width:48px;height:19px;border-left:1px solid #F8F7F0;border-top:1px solid #F8F7F0;border-right:2px solid #8E8B7C;border-top-right-radius:2px;box-shadow:inset -1px 0 0 #C8C5B6"></div>
<div class="a ui" style="left:154px;top:440px;">Class</div>
<div class="a" style="left:52px;top:436px;width:49px;height:21px;border-left:1px solid #F8F7F0;border-top:1px solid #F8F7F0;border-right:2px solid #8E8B7C;border-top-right-radius:2px;box-shadow:inset -1px 0 0 #C8C5B6"></div>
<div class="a ui" style="left:58px;top:438px;">Image</div>
<div class="a" style="left:7px;top:457px;width:332px;height:106px;background:#fff;border:1px solid #7A7868;border-top-color:#F8F7F2;box-shadow:inset -1px -1px 0 #F2F0E6,inset -2px -2px 0 #F8F7F2"></div>
<div class="a" style="left:7px;top:457px;width:327px;height:1px;background:#7A7868"></div>
<div class="a" style="left:338px;top:454px;width:1px;height:3px;background:#7A7868"></div>
<div class="a" style="left:3px;top:557px;width:5px;height:5px;background:#F6F5EE"></div>
<div class="a" style="left:7px;top:557px;width:1px;height:5px;background:#F0EFE6"></div>
<div class="a" style="left:2px;top:562px;width:337px;height:1px;background:#7A7868"></div>
<div class="a" style="left:2px;top:432px;width:1px;height:126px;background:#F8F7F0"></div>
<div class="a" style="left:12px;top:463px;width:7px;height:7px;background:#fff;border:1px solid #8C8C8C"></div>
<div class="a" style="left:13px;top:466px;width:5px;height:1px;background:#000"></div>
<div class="a" style="left:15px;top:464px;width:1px;height:5px;background:#000"></div>
<div class="a" style="left:20px;top:466px;width:8px;height:1px;background:repeating-linear-gradient(90deg,#B0B0B0 0 1px,transparent 1px 2px)"></div>
<svg class="a" style="left:30px;top:462px" width="11" height="10" shape-rendering="crispEdges"><path d="M0 2 H6 V0 L11 5 L6 10 V8 H0 Z" fill="#1830D0"/><path d="M0 2 H6 V0 L9 3 V5 H0 Z" fill="#20B040"/><path d="M6 0 L11 5 L6 10" fill="none" stroke="#001060" stroke-width="0.7"/></svg>
<svg class="a" style="left:42px;top:461px" width="11" height="11" shape-rendering="crispEdges"><path d="M0.5 0.5 H7.5 L10.5 3.5 V10.5 H0.5 Z" fill="#fff" stroke="#000"/><path d="M4 2 V3 M6 2 V3 M5 4 V4.8 M2 7.5 H4 M2 9 H4 M5 7 V9.5 M7 7.5 H9 M7 9 H9" stroke="#000" fill="none"/></svg>
<div class="a" style="left:58px;top:459px;width:251px;height:14px;background:#ECE9D8"></div>
<div class="a" style="left:60px;top:460px;font-family:'Liberation Sans',sans-serif;font-size:12px;line-height:15px;letter-spacing:-0.3px;white-space:pre">E:\s3c2440\2\call C\testt_Data\DebugRel\testt.axf</div>
<div class="a" style="left:347px;top:76px;width:1px;height:489px;background:#C8C6B8"></div>
<div class="a" style="left:348px;top:76px;width:1px;height:489px;background:#000"></div>
<div class="a" style="left:349px;top:76px;width:1px;height:338px;background:#A8A698"></div>
<div class="a" style="left:350px;top:76px;width:1px;height:338px;background:#707064"></div>
<div class="a" style="left:351px;top:106px;width:1px;height:289px;background:#F4F2E8"></div>
<div class="a" style="left:351px;top:75px;width:364px;height:30px;background:linear-gradient(#3D95FF 0px,#0A62EC 2px,#0054E3 4px,#0053E1 15px,#005CF0 20px,#0064F8 27px,#0040CF 29px)"></div>
<div class="a" style="left:351px;top:104px;width:364px;height:2px;background:#0A0A3A"></div>
<svg class="a" style="left:351px;top:82px" width="16" height="16" viewBox="0 0 16 16"><circle cx="8" cy="8" r="6.8" fill="#3ED8D8" stroke="#A81A20" stroke-width="2.2"/><path d="M6.5 3.5 L9 3.5 L10.5 9 L8.5 12.5 L6 10 Z" fill="#145020"/><circle cx="5" cy="7" r="1" fill="#145060"/><circle cx="11" cy="9" r="1" fill="#145060"/><line x1="3.5" y1="12.5" x2="12.5" y2="3.5" stroke="#E03010" stroke-width="2.2"/></svg>
<div class="a " style="left:371px;top:85px;font-family:'Liberation Mono',monospace;font-weight:bold;font-size:12px;line-height:14px;letter-spacing:0.8px;color:#fff;-webkit-text-stroke:0.3px #fff;text-shadow:1px 1px 0 #0A246A">ARM7TDMI - E:\s3c2440\2\call C\main.C</div>
<div class="a" style="left:351px;top:106px;width:364px;height:289px;background:#fff"></div>
<div class="a" style="left:352px;top:106px;width:81px;height:225px;background:#ECE9D8"></div>
<div class="a code" style="left:370px;top:109px;">1</div>
<div class="a code" style="left:433px;top:109px;">//main.C</div>
<div class="a code" style="left:370px;top:124px;">2</div>
<div class="a code" style="left:433px;top:124px;"></div>
<div class="a code" style="left:370px;top:139px;">3</div>
<div class="a code" style="left:433px;top:139px;">extern int test(int, int, int);</div>
<div class="a code" style="left:370px;top:154px;">4</div>
<div class="a code" style="left:433px;top:154px;">int n;</div>
<div class="a code" style="left:370px;top:169px;">5</div>
<div class="a code" style="left:433px;top:169px;"></div>
<div class="a code" style="left:370px;top:184px;">6</div>
<div class="a code" style="left:433px;top:184px;">int main(void)</div>
<div class="a code" style="left:370px;top:199px;">7</div>
<div class="a code" style="left:433px;top:199px;"></div>
<div class="a code" style="left:370px;top:214px;">8</div>
<div class="a code" style="left:433px;top:214px;">      = test(2,4,6);</div>
<div class="a code" style="left:370px;top:229px;">9</div>
<div class="a code" style="left:433px;top:229px;">    while(1);</div>
<div class="a code" style="left:370px;top:244px;">10</div>
<div class="a code" style="left:433px;top:244px;">}</div>
<div class="a code" style="left:370px;top:259px;">11</div>
<div class="a code" style="left:433px;top:259px;"></div>
<div class="a code" style="left:370px;top:274px;">12</div>
<div class="a code" style="left:433px;top:274px;">int add(int a, int b, int c)</div>
<div class="a code" style="left:370px;top:289px;">13</div>
<div class="a code" style="left:433px;top:289px;">{</div>
<div class="a code" style="left:370px;top:304px;">14</div>
<div class="a code" style="left:433px;top:304px;">    return a+b+c;</div>
<div class="a code" style="left:370px;top:319px;">15</div>
<div class="a code" style="left:433px;top:319px;">}</div>
<div class="a" style="left:433px;top:196px;width:8px;height:15px;background:#E00C0C"></div>
<div class="a code" style="left:433px;top:197px;color:#500000">{</div>
<div class="a" style="left:460px;top:211px;width:7px;height:15px;background:#000"></div>
<div class="a code" style="left:460px;top:210px;color:#777">n</div>
<div class="a" style="left:468px;top:211px;width:2px;height:15px;background:#000"></div>
<svg class="a" style="left:351px;top:199px" width="10" height="10"><path d="M3 0 H7 L10 3 V7 L7 10 H3 L0 7 V3 Z" fill="#F00000"/></svg>
<svg class="a" style="left:355px;top:229px" width="11" height="10"><path d="M0 3 H5 V0 L10 5 L5 10 V7 H0 Z" fill="#0000F0"/><path d="M5 0 L10 5 L5 10" fill="none" stroke="#000020" stroke-width="0.8"/></svg>
<div class="a" style="left:351px;top:395px;width:364px;height:17px;background:linear-gradient(#F6F5EE,#EEEDE3 80%,#E2E4D2);border-top:1px solid #F4F3EC;border-bottom:1px solid #6E6D60"></div>
<div class="a" style="left:351px;top:395px;width:17px;height:16px;background:linear-gradient(#F4F3EC,#ECEBE0 80%,#E0E2D0);border-right:1px solid #8E8C80"></div>
<svg class="a" style="left:356px;top:400px" width="4" height="8" shape-rendering="crispEdges"><rect x="3" y="0" width="1" height="8"/><rect x="2" y="1" width="1" height="6"/><rect x="1" y="2" width="1" height="4"/><rect x="0" y="3" width="1" height="2"/></svg>
<div class="a" style="left:351px;top:412px;width:364px;height:2px;background:#fff"></div>
<div class="a" style="left:351px;top:414px;width:364px;height:1px;background:#1848E8"></div>
<div class="a" style="left:351px;top:415px;width:364px;height:2px;background:#0024B8"></div>
<div class="a" style="left:351px;top:417px;width:364px;height:1px;background:#2A4AC8"></div>
<div class="a" style="left:349px;top:414px;width:1px;height:151px;background:#B0B2C0"></div>
<div class="a" style="left:350px;top:414px;width:1px;height:151px;background:#8A8AB0"></div>
<div class="a" style="left:351px;top:418px;width:4px;height:147px;background:#7888D8"></div>
<div class="a" style="left:355px;top:418px;width:1px;height:147px;background:#A0A8D8"></div>
<div class="a" style="left:356px;top:418px;width:1px;height:147px;background:#000010"></div>
<div class="a" style="left:357px;top:418px;width:1px;height:147px;background:#F8F6EA"></div>
<div class="a" style="left:358px;top:418px;width:357px;height:147px;background:#fff"></div>
<div class="a" style="left:358px;top:418px;width:81px;height:147px;background:#ECE9D8"></div>
<div class="a" style="left:357px;top:418px;width:358px;height:147px;overflow:hidden">
<div class="a code" style="left:19px;top:-4px;">4</div>
<div class="a code" style="left:82px;top:-4px;">    EXPORT test   ;</div>
<div class="a code" style="left:19px;top:11px;">5</div>
<div class="a code" style="left:82px;top:11px;"></div>
<div class="a code" style="left:19px;top:26px;">6</div>
<div class="a code" style="left:82px;top:26px;">    AREA test,CODE,READONLY</div>
<div class="a code" style="left:19px;top:41px;">7</div>
<div class="a code" style="left:82px;top:41px;">    CODE32</div>
<div class="a code" style="left:19px;top:56px;">8</div>
<div class="a code" style="left:82px;top:56px;"></div>
<div class="a code" style="left:19px;top:71px;">9</div>
<div class="a code" style="left:82px;top:71px;">    STR LR,[SP],#-4    ;</div>
<div class="a code" style="left:19px;top:86px;">10</div>
<div class="a code" style="left:82px;top:86px;">    BL  add            ;</div>
<div class="a code" style="left:19px;top:101px;">11</div>
<div class="a code" style="left:82px;top:101px;">    LDR LR,[SP,#4]!    ;</div>
<div class="a code" style="left:19px;top:116px;">12</div>
<div class="a code" style="left:82px;top:116px;">    MOV PC,LR          ;</div>
<div class="a code" style="left:19px;top:131px;">13</div>
<div class="a code" style="left:82px;top:131px;"></div>
</div>
<div class="a" style="left:358px;top:418px;width:357px;height:147px;overflow:hidden">
<svg class="a" style="left:215px;top:-4px" width="13" height="12" viewBox="0 0 13 12"><path d="M3 0.5 L0.5 5 M2.5 3 V11.5 M4 3.5 H11.5 M6.5 0.5 V7 M9.5 0.5 V7 M4 7.5 H12 M6 9 L4.5 11.5 M9 9 L11 11.5" fill="none" stroke="#1A1A1A" stroke-width="1"/></svg>
<svg class="a" style="left:228px;top:-4px" width="13" height="12" viewBox="0 0 13 12"><path d="M5.5 0 V11 M1.5 2 V5.5 H10.5 V2 M0.5 6.5 V11.5 H11.5 V6.5" fill="none" stroke="#1A1A1A" stroke-width="1"/></svg>
<div class="a code" style="left:241px;top:-4px">test</div>
<svg class="a" style="left:249px;top:71px" width="13" height="12" viewBox="0 0 13 12"><path d="M3 0.5 L0.5 5 M2.5 3 V11.5 M4.5 0.5 H10.5 V4.5 H4.5 Z M3.5 6.5 H11.5 M7.5 5 V11.5 M7 7 L4 11 M8 7 L11 11" fill="none" stroke="#1A1A1A" stroke-width="1"/></svg>
<svg class="a" style="left:262px;top:71px" width="13" height="12" viewBox="0 0 13 12"><path d="M0.5 2.5 H11.5 M5 0 L1 7 M2.5 5 V11.5 M5.5 4.5 H10 L7.5 6.5 M7.5 6.5 V11 L6.5 11.5 M4.5 8.5 H11.5" fill="none" stroke="#1A1A1A" stroke-width="1"/></svg>
<div class="a code" style="left:276px;top:71px">LR</div>
<svg class="a" style="left:291px;top:71px" width="13" height="12" viewBox="0 0 13 12"><path d="M2.5 3 V4.5 M2.5 8 V9.5" fill="none" stroke="#1A1A1A" stroke-width="1"/></svg>
<svg class="a" style="left:305px;top:71px" width="13" height="12" viewBox="0 0 13 12"><path d="M4 0.5 H6 M6 1 L1 11.5 M6 3 L11.5 11.5" fill="none" stroke="#1A1A1A" stroke-width="1"/></svg>
<svg class="a" style="left:319px;top:71px" width="13" height="12" viewBox="0 0 13 12"><path d="M0.5 3.5 H5 M2.5 0.5 V11.5 M2.5 4 L0.5 8 M3 5 L4.5 7 M6 3.5 H10.5 M5.5 6.5 H11.5 M7.5 0.5 L11 11 M10.5 0.5 L11.5 1.5 M11 8 L8 11.5" fill="none" stroke="#1A1A1A" stroke-width="1"/></svg>
<svg class="a" style="left:249px;top:86px" width="13" height="12" viewBox="0 0 13 12"><path d="M1 1 L2 2 M0.5 4.5 H2.5 V10 L1 11.5 M4.5 11.5 V0.5 H11.5 V11 L10.5 11.5 M6 3.5 H10 M8 2 V6 M6 5.5 H10 M6.5 7.5 H9.5 V10 H6.5 Z" fill="none" stroke="#1A1A1A" stroke-width="1"/></svg>
<svg class="a" style="left:261px;top:86px" width="13" height="12" viewBox="0 0 13 12"><path d="M1.5 1 V10 L0.5 11.5 M1.5 0.5 H10.5 V11.5 M1.5 4.5 H10.5 M1.5 7.5 H10.5 M6 0.5 V11.5" fill="none" stroke="#1A1A1A" stroke-width="1"/></svg>
<div class="a code" style="left:275px;top:86px">C</div>
<svg class="a" style="left:284px;top:86px" width="13" height="12" viewBox="0 0 13 12"><path d="M1 2 L4.5 1 M0.5 4.5 H5 M2.5 1.5 V11.5 M2.5 5 L0.5 9 M3 6 L4.5 8 M6.5 0.5 H11 V4.5 H6.5 Z M6 6.5 H11.5 M6.5 8.5 H11 M5.5 11.5 H12 M8.5 6.5 V11.5" fill="none" stroke="#1A1A1A" stroke-width="1"/></svg>
<svg class="a" style="left:297px;top:86px" width="13" height="12" viewBox="0 0 13 12"><path d="M5.5 0 V1.5 M1.5 1.5 H11.5 M1.5 1.5 V8 L0.5 11.5 M3.5 3.5 H10 L7.5 5.5 M5 5 L7.5 6.5 M3.5 7.5 H11.5 L10.5 8.5 M7.5 6.5 V11 L6.5 11.5" fill="none" stroke="#1A1A1A" stroke-width="1"/></svg>
<div class="a code" style="left:249px;top:101px">LR</div>
<svg class="a" style="left:264px;top:101px" width="13" height="12" viewBox="0 0 13 12"><path d="M5.5 0 V11 M1.5 2 V5.5 H10.5 V2 M0.5 6.5 V11.5 H11.5 V6.5" fill="none" stroke="#1A1A1A" stroke-width="1"/></svg>
<svg class="a" style="left:278px;top:101px" width="13" height="12" viewBox="0 0 13 12"><path d="M0.5 3.5 H5 M2.5 0.5 V11.5 M2.5 4 L0.5 8 M3 5 L4.5 7 M6 3.5 H10.5 M5.5 6.5 H11.5 M7.5 0.5 L11 11 M10.5 0.5 L11.5 1.5 M11 8 L8 11.5" fill="none" stroke="#1A1A1A" stroke-width="1"/></svg>
<svg class="a" style="left:250px;top:116px" width="13" height="12" viewBox="0 0 13 12"><path d="M1 1 L2.5 2.5 M0.5 4.5 H2.5 V9 L0.5 10.5 M1.5 10 Q3 11.5 11.5 11.5 M4.5 0.5 H11 M4.5 0.5 V7 L3.5 9 M5 3.5 H10.5 L6 9.5 M6.5 4 L11 9" fill="none" stroke="#1A1A1A" stroke-width="1"/></svg>
<svg class="a" style="left:263px;top:116px" width="13" height="12" viewBox="0 0 13 12"><path d="M0.5 0.5 H11.5 V11.5 H0.5 Z M3.5 3.5 H8.5 V8.5 H3.5 Z" fill="none" stroke="#1A1A1A" stroke-width="1"/></svg>
<div class="a code" style="left:276px;top:116px">main</div>
</div>
</body></html>
